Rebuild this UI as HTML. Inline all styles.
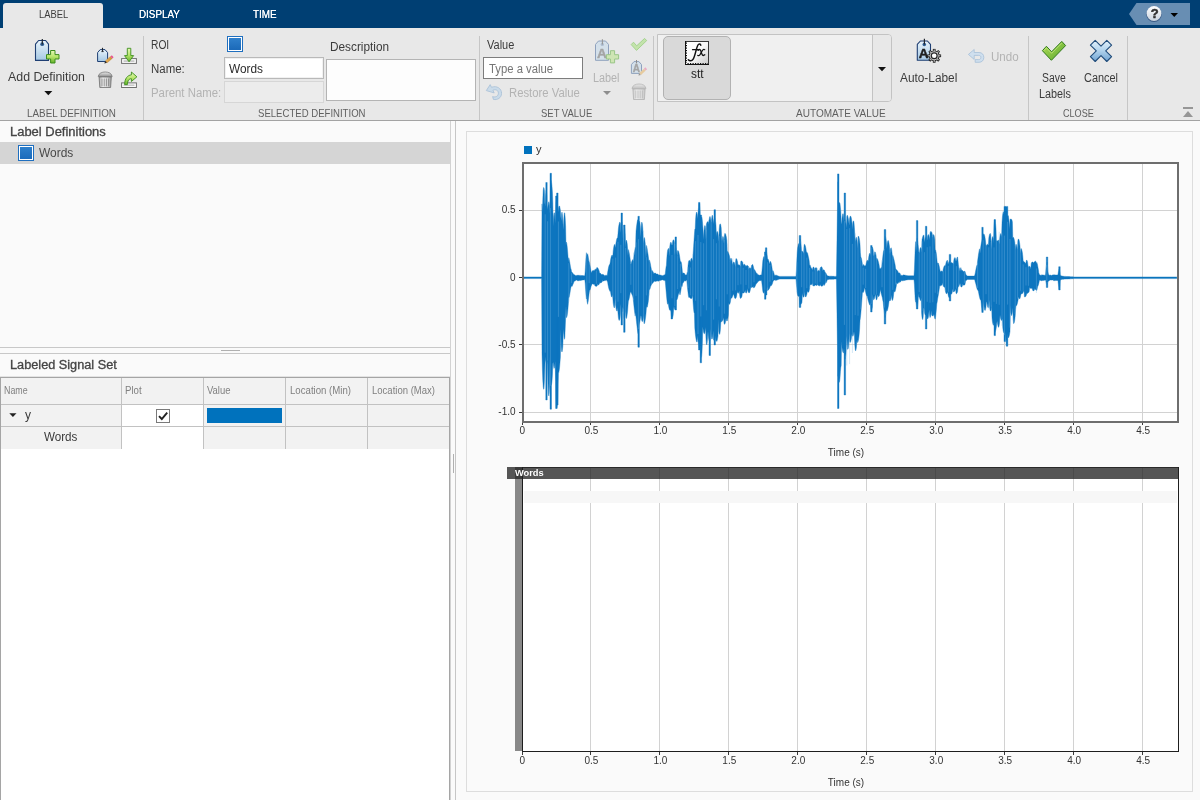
<!DOCTYPE html>
<html><head><meta charset="utf-8"><title>Signal Labeler</title>
<style>
*{box-sizing:border-box;margin:0;padding:0}
html,body{width:1200px;height:800px;overflow:hidden;background:#fafafa;font-family:"Liberation Sans",sans-serif;}
#root{position:relative;width:1200px;height:800px;overflow:hidden;}
.a{position:absolute;}
.t{position:absolute;white-space:nowrap;transform-origin:0 50%;display:block;filter:grayscale(1);}
text{filter:grayscale(1);}
svg{position:absolute;overflow:visible;}
</style></head><body><div id="root">

<div class="a" style="left:0;top:0;width:1200px;height:28px;background:#003f73"></div>
<div class="a" style="left:3px;top:3px;width:100px;height:25px;background:#e8e8e8;border-radius:3px 3px 0 0"></div>
<span class="t" style="left:38.80px;top:6.69px;font-size:11px;line-height:15px;color:#3c3c3c;transform:scaleX(0.8526);">LABEL</span>
<span class="t" style="left:138.70px;top:6.69px;font-size:11px;line-height:15px;color:#ffffff;transform:scaleX(0.8937);text-shadow:0 0 0.6px #fff;">DISPLAY</span>
<span class="t" style="left:253.30px;top:6.69px;font-size:11px;line-height:15px;color:#ffffff;transform:scaleX(0.9020);text-shadow:0 0 0.6px #fff;">TIME</span>
<svg style="left:1128px;top:3px" width="64" height="22" viewBox="0 0 64 22"><path d="M1 11 L8.5 0 H62 V22 H8.5 Z" fill="#688eb3"/><defs><linearGradient id="hg" x1="0" y1="0" x2="0" y2="1"><stop offset="0" stop-color="#ffffff"/><stop offset="1" stop-color="#c9d3de"/></linearGradient></defs><circle cx="26" cy="11.3" r="7.7" fill="#2b4a75" opacity="0.75"/><circle cx="26" cy="10.5" r="7.4" fill="url(#hg)"/><path d="M42.5 10 h7.5 l-3.75 4z" fill="#000"/></svg>
<span class="t" style="left:1150.70px;top:5.40px;font-size:13px;line-height:17px;color:#1f2f4f;transform:scaleX(1.0000);font-weight:bold;-webkit-text-stroke:0.5px #1f2f4f;">?</span>
<div class="a" style="left:0;top:28px;width:1200px;height:92px;background:#e8e8e8"></div>
<div class="a" style="left:0;top:120px;width:1200px;height:1px;background:#a3a3a3"></div>
<div class="a" style="left:143px;top:36px;width:1px;height:84px;background:#c6c6c6"></div>
<div class="a" style="left:479px;top:36px;width:1px;height:84px;background:#c6c6c6"></div>
<div class="a" style="left:653px;top:36px;width:1px;height:84px;background:#c6c6c6"></div>
<div class="a" style="left:1028px;top:36px;width:1px;height:84px;background:#c6c6c6"></div>
<div class="a" style="left:1127px;top:36px;width:1px;height:84px;background:#c6c6c6"></div>
<div class="a" style="left:657px;top:34px;width:235px;height:68px;background:#f0f0f0;border:1px solid #c3c3c3;border-radius:0 4px 4px 0"></div>
<div class="a" style="left:872px;top:35px;width:19px;height:66px;background:#e8e8e8;border-left:1px solid #c3c3c3;border-radius:0 3px 3px 0"></div>
<svg style="left:878px;top:67px" width="9" height="5"><path d="M0 0 h8 l-4 4.2z" fill="#111"/></svg>
<div class="a" style="left:663px;top:36px;width:68px;height:64px;background:#d9d9d9;border:1px solid #b2b2b2;border-radius:5px"></div>
<span class="t" style="left:27.00px;top:105.69px;font-size:11px;line-height:15px;color:#5f5f5f;transform:scaleX(0.8969);">LABEL DEFINITION</span>
<span class="t" style="left:257.50px;top:105.69px;font-size:11px;line-height:15px;color:#5f5f5f;transform:scaleX(0.8707);">SELECTED DEFINITION</span>
<span class="t" style="left:541.30px;top:105.69px;font-size:11px;line-height:15px;color:#5f5f5f;transform:scaleX(0.8604);">SET VALUE</span>
<span class="t" style="left:796.00px;top:105.69px;font-size:11px;line-height:15px;color:#5f5f5f;transform:scaleX(0.9125);">AUTOMATE VALUE</span>
<span class="t" style="left:1062.50px;top:105.69px;font-size:11px;line-height:15px;color:#5f5f5f;transform:scaleX(0.8259);">CLOSE</span>
<span class="t" style="left:8.00px;top:68.84px;font-size:12px;line-height:16px;color:#3b3b3b;transform:scaleX(1.0306);">Add Definition</span>
<svg style="left:44px;top:91px" width="9" height="5"><path d="M0.3 0 h8 l-4 4.3z" fill="#111"/></svg>
<span class="t" style="left:150.80px;top:36.84px;font-size:12px;line-height:16px;color:#3b3b3b;transform:scaleX(0.8531);">ROI</span>
<span class="t" style="left:150.80px;top:60.84px;font-size:12px;line-height:16px;color:#3b3b3b;transform:scaleX(0.9535);">Name:</span>
<span class="t" style="left:150.80px;top:84.84px;font-size:12px;line-height:16px;color:#b3b3b3;transform:scaleX(0.9482);">Parent Name:</span>
<span class="t" style="left:330.00px;top:38.84px;font-size:12px;line-height:16px;color:#3b3b3b;transform:scaleX(0.9830);">Description</span>
<span class="t" style="left:486.70px;top:36.84px;font-size:12px;line-height:16px;color:#3b3b3b;transform:scaleX(0.9161);">Value</span>
<span class="t" style="left:508.70px;top:84.84px;font-size:12px;line-height:16px;color:#b3b3b3;transform:scaleX(0.9421);">Restore Value</span>
<span class="t" style="left:593.00px;top:69.84px;font-size:12px;line-height:16px;color:#b3b3b3;transform:scaleX(0.9026);">Label</span>
<span class="t" style="left:690.80px;top:65.84px;font-size:12px;line-height:16px;color:#222;transform:scaleX(0.9867);">stt</span>
<span class="t" style="left:899.70px;top:69.84px;font-size:12px;line-height:16px;color:#3b3b3b;transform:scaleX(0.9872);">Auto-Label</span>
<span class="t" style="left:990.60px;top:48.84px;font-size:12px;line-height:16px;color:#b3b3b3;transform:scaleX(0.9656);">Undo</span>
<span class="t" style="left:1042.30px;top:69.84px;font-size:12px;line-height:16px;color:#3b3b3b;transform:scaleX(0.8665);">Save</span>
<span class="t" style="left:1038.50px;top:85.84px;font-size:12px;line-height:16px;color:#3b3b3b;transform:scaleX(0.9022);">Labels</span>
<span class="t" style="left:1084.00px;top:69.84px;font-size:12px;line-height:16px;color:#3b3b3b;transform:scaleX(0.9103);">Cancel</span>
<div class="a" style="left:224px;top:57px;width:100px;height:22px;background:#fff;border:1px solid #b9b9b9;box-shadow:inset 0 0 0 1px #f1f1f1"></div>
<span class="t" style="left:229.00px;top:60.84px;font-size:12px;line-height:16px;color:#2b2b2b;transform:scaleX(0.9868);">Words</span>
<div class="a" style="left:224px;top:81px;width:100px;height:22px;background:#ececec;border:1px solid #d6d6d6"></div>
<div class="a" style="left:326px;top:59px;width:150px;height:42px;background:#fdfdfd;border:1px solid #b4b4b4"></div>
<div class="a" style="left:483px;top:57px;width:100px;height:22px;background:#fff;border:1px solid #7d7d7d"></div>
<span class="t" style="left:488.70px;top:60.84px;font-size:12px;line-height:16px;color:#757575;transform:scaleX(0.9421);">Type a value</span>
<svg style="left:0;top:0" width="1200" height="125" viewBox="0 0 1200 125">
<defs>
<linearGradient id="tg" x1="0" y1="0" x2="0" y2="1"><stop offset="0" stop-color="#e9f4fb"/><stop offset="1" stop-color="#a5c8e4"/></linearGradient>
<linearGradient id="gp" x1="0" y1="0" x2="0" y2="1"><stop offset="0" stop-color="#e6f9b8"/><stop offset="0.5" stop-color="#b7e56a"/><stop offset="1" stop-color="#63b12a"/></linearGradient>
<linearGradient id="gck" x1="0" y1="0" x2="1" y2="1"><stop offset="0" stop-color="#b4e05a"/><stop offset="1" stop-color="#58a52c"/></linearGradient>
<linearGradient id="bx" x1="0" y1="0" x2="0" y2="1"><stop offset="0" stop-color="#e4f2fc"/><stop offset="0.45" stop-color="#b5d5ee"/><stop offset="1" stop-color="#6fa3d2"/></linearGradient>
<linearGradient id="trg" x1="0" y1="0" x2="1" y2="0"><stop offset="0" stop-color="#a8a8a8"/><stop offset="0.3" stop-color="#f4f4f4"/><stop offset="0.7" stop-color="#d6d6d6"/><stop offset="1" stop-color="#9a9a9a"/></linearGradient>
<linearGradient id="lidg" x1="0" y1="0" x2="0" y2="1"><stop offset="0" stop-color="#ececec"/><stop offset="1" stop-color="#909090"/></linearGradient>
<linearGradient id="fxg" x1="0" y1="0" x2="1" y2="1"><stop offset="0" stop-color="#ffffff"/><stop offset="0.5" stop-color="#fafafa"/><stop offset="1" stop-color="#c8c8c8"/></linearGradient>
<linearGradient id="pen" x1="0" y1="0" x2="1" y2="1"><stop offset="0" stop-color="#f0b860"/><stop offset="1" stop-color="#c98a2b"/></linearGradient>
<linearGradient id="sq" x1="0" y1="0" x2="0" y2="1"><stop offset="0" stop-color="#2f80cc"/><stop offset="1" stop-color="#1b69b8"/></linearGradient>
</defs>

<!-- Add Definition: tag + plus -->
<g id="tagbig">
<path d="M35.5 60.4 V44.2 L38.6 40.5 H45.6 L48.5 44.2 V60.4 Z" fill="url(#tg)" stroke="#1f3f73" stroke-width="1.1" stroke-linejoin="round"/>
<circle cx="42.2" cy="44.2" r="1.9" fill="#2f5f95"/>
<path d="M42.3 39 V44.6" stroke="#20262e" stroke-width="1.2"/>
</g>
<path d="M50.6 50.5 h4.4 v4.1 h4 v4.4 h-4 v4 h-4.4 v-4 h-4.1 v-4.4 h4.1z" fill="url(#gp)" stroke="#3c8d1c" stroke-width="1" stroke-linejoin="round"/>

<!-- edit tag -->
<path d="M97.6 61.5 V52.6 L100.2 49.6 H105 L107.6 52.6 V61.5 Z" fill="url(#tg)" stroke="#1f3f73" stroke-width="1" stroke-linejoin="round"/>
<path d="M102.5 47.8 V51.6" stroke="#20262e" stroke-width="1.1"/>
<path d="M101.4 51.6 h2.3" stroke="#20262e" stroke-width="0.9"/>
<g transform="translate(104.3 63.5) rotate(-40.6)">
<path d="M0 0 L2.6 -1.35 V1.35Z" fill="#2b2b2b"/>
<rect x="2.6" y="-1.35" width="6.6" height="2.7" fill="url(#pen)" stroke="#b77a22" stroke-width="0.3"/>
<rect x="9.2" y="-1.35" width="1.9" height="2.7" fill="#e8558f"/>
</g>

<!-- import -->
<rect x="121.6" y="58.6" width="14.8" height="4.8" fill="#ffffff" stroke="#6f6f6f" stroke-width="1"/>
<rect x="123.5" y="60.2" width="11" height="1.8" fill="#c9c9c9"/>
<path d="M127.3 48.3 H130.8 V55.6 H133.6 L129.05 61.8 L124.5 55.6 H127.3Z" fill="url(#gp)" stroke="#3c8d1c" stroke-width="0.9" stroke-linejoin="round"/>

<!-- trash -->
<g id="trash">
<path d="M98.2 76.6 C98.6 73.2 102 72 105.2 72 C108.4 72 111.8 73.2 112.2 76.6 Z" fill="url(#lidg)" stroke="#6c6c6c" stroke-width="0.7"/>
<path d="M99.1 77 H111.3 L110.6 87.5 H99.8 Z" fill="url(#trg)" stroke="#6f6f6f" stroke-width="0.8"/>
<path d="M102 78.5 V86.3 M104.2 78.5 V86.3 M106.4 78.5 V86.3 M108.6 78.5 V86.3" stroke="#7d7d7d" stroke-width="0.8"/>
</g>

<!-- export -->
<rect x="121.6" y="82.9" width="14.8" height="4.6" fill="#ffffff" stroke="#6f6f6f" stroke-width="1"/>
<rect x="123.5" y="84.4" width="11" height="1.7" fill="#c9c9c9"/>
<path d="M124.6 84.6 C124.6 78.8 127.6 75 131.4 74.9 V72 L136.9 76.8 L131.4 81.5 V78.7 C129 78.7 127.6 80.6 127.4 84.6 Z" fill="url(#gp)" stroke="#3c8d1c" stroke-width="0.9" stroke-linejoin="round"/>

<!-- ROI colour swatch -->
<rect x="227.5" y="36.5" width="15" height="15" fill="#ffffff" stroke="#1f6fbf" stroke-width="1"/>
<rect x="229" y="38" width="12" height="12" fill="url(#sq)"/>

<!-- restore (disabled) -->
<g opacity="0.95">
<path d="M486.3 90.6 L490.2 84.6 L491.5 87.3 C496.8 85.2 501.6 88.6 501.6 93.3 C501.6 97.6 497.6 100.4 493.4 99.4 L492.6 96.6 C495.6 97.6 498.4 96.2 498.4 93.2 C498.4 90.4 495.8 88.9 492.9 90.2 L494.2 92.9 Z" fill="#c9dbea" stroke="#a3bdd5" stroke-width="0.8" stroke-linejoin="round"/>
</g>

<!-- Label (disabled): tag A + plus -->
<g opacity="0.55">
<path d="M595.5 60.3 V44.4 L598.5 41 H605.5 L608.5 44.4 V60.3 Z" fill="#c4dbec" stroke="#47689a" stroke-width="1" stroke-linejoin="round"/>
<circle cx="602.3" cy="44.4" r="1.7" fill="#7f9cc0"/>
<path d="M602.4 39.3 V44.4" stroke="#555" stroke-width="1.1"/>
<text x="596.9" y="57.7" font-family="Liberation Sans, sans-serif" font-weight="bold" font-size="13.5" fill="#6e6e6e" stroke="#6e6e6e" stroke-width="0.4">A</text>
<path d="M610.4 50.7 h4.2 v4 h4 v4.3 h-4 v3.9 h-4.2 v-3.9 h-4 v-4.3 h4z" fill="#b9e48a" stroke="#5aa93a" stroke-width="1" stroke-linejoin="round"/>
</g>
<path d="M603 91 h8 l-4 4z" fill="#8d8d8d"/>

<!-- faded check -->
<path d="M631.2 44.6 L633.5 42.2 L636.7 45.8 L644.6 38.4 L646.7 40.6 L636.5 50.4 Z" fill="#c3e3ab" stroke="#9fd089" stroke-width="0.9" stroke-linejoin="round"/>

<!-- faded edit A tag -->
<g opacity="0.55">
<path d="M631.4 73.4 V64.6 L634 61.6 H638.9 L641.5 64.6 V73.4 Z" fill="#c4dbec" stroke="#47689a" stroke-width="1" stroke-linejoin="round"/>
<path d="M636.5 60 V63.4" stroke="#444" stroke-width="1"/>
<text x="632.8" y="72.4" font-family="Liberation Sans, sans-serif" font-weight="bold" font-size="10" fill="#6e6e6e" stroke="#6e6e6e" stroke-width="0.35">A</text>
<g transform="translate(638.4 75.6) rotate(-43)">
<path d="M0 0 L2.4 -1.3 V1.3Z" fill="#555"/>
<rect x="2.4" y="-1.3" width="6.4" height="2.6" fill="#e6b566"/>
<rect x="8.8" y="-1.3" width="1.9" height="2.6" fill="#ee7aa6"/>
</g>
</g>

<!-- faded trash -->
<g opacity="0.45" transform="translate(533.8 12)">
<path d="M98.2 76.6 C98.6 73.2 102 72 105.2 72 C108.4 72 111.8 73.2 112.2 76.6 Z" fill="url(#lidg)" stroke="#6c6c6c" stroke-width="0.7"/>
<path d="M99.1 77 H111.3 L110.6 87.5 H99.8 Z" fill="url(#trg)" stroke="#6f6f6f" stroke-width="0.8"/>
<path d="M102 78.5 V86.3 M104.2 78.5 V86.3 M106.4 78.5 V86.3 M108.6 78.5 V86.3" stroke="#7d7d7d" stroke-width="0.8"/>
</g>

<!-- fx icon -->
<rect x="685.5" y="41.5" width="23" height="23" fill="url(#fxg)" stroke="#3a3a3a" stroke-width="1"/>
<path d="M685.5 41 V65" stroke="#111" stroke-width="1"/>
<path d="M685 64.5 H709" stroke="#111" stroke-width="1"/>
<path d="M686.5 42.5 V63" stroke="#111" stroke-width="1" stroke-dasharray="1.2 1.3"/>
<path d="M687.5 63.5 H708" stroke="#111" stroke-width="1" stroke-dasharray="1.2 1.3"/>
<g fill="none" stroke="#111" stroke-linecap="round" stroke-linejoin="round">
<path d="M700.8 45.3 C700.7 43.7 698.7 43.4 697.8 45.3 C696.9 47.2 696.4 49.2 695.6 52.2 C694.8 55.2 694.1 57.7 693 59.4 C691.9 61.1 689.6 61.2 688.3 59.8" stroke-width="1.45"/>
<path d="M692.5 49.7 H698.2" stroke-width="1.2"/>
<path d="M698.1 50.3 C699.3 48.8 700.5 49.4 701.1 51.6 C701.9 54.6 702.7 56.5 704.8 54.8" stroke-width="1.35"/>
<path d="M704.7 49.7 C703.1 48.8 702.3 50.6 701.3 52.4 C700.3 54.4 699.3 56.5 697.8 55.4" stroke-width="1.25"/>
</g>

<!-- auto-label -->
<path d="M917.3 60.3 V44.4 L920.4 41 H927.4 L930.5 44.4 V60.3 Z" fill="url(#tg)" stroke="#1f3f73" stroke-width="1.1" stroke-linejoin="round"/>
<circle cx="924.3" cy="44.5" r="1.8" fill="#2f5f95"/>
<path d="M924.4 38.7 V44.6" stroke="#20262e" stroke-width="1.2"/>
<text x="918.7" y="57.8" font-family="Liberation Sans, sans-serif" font-weight="bold" font-size="13.5" fill="#1e1e1e" stroke="#1e1e1e" stroke-width="0.45">A</text>
<g transform="translate(934.2 55.8)">
<g stroke="#1a1a1a" stroke-width="2.7" stroke-linecap="butt">
<path d="M0 -4.4 V-6.9"/><path d="M0 4.4 V6.9"/><path d="M-4.4 0 H-6.9"/><path d="M4.4 0 H6.9"/>
<path d="M3.1 -3.1 L4.9 -4.9"/><path d="M-3.1 -3.1 L-4.9 -4.9"/><path d="M3.1 3.1 L4.9 4.9"/><path d="M-3.1 3.1 L-4.9 4.9"/>
</g>
<circle r="5.4" fill="#1a1a1a"/>
<g stroke="#bdbdbd" stroke-width="1.1" stroke-linecap="butt">
<path d="M0 -4.2 V-6.2"/><path d="M0 4.2 V6.2"/><path d="M-4.2 0 H-6.2"/><path d="M4.2 0 H6.2"/>
<path d="M3 -3 L4.4 -4.4"/><path d="M-3 -3 L-4.4 -4.4"/><path d="M3 3 L4.4 4.4"/><path d="M-3 3 L-4.4 4.4"/>
</g>
<circle r="4.5" fill="#c6c6c6"/>
<circle r="3.5" fill="#262626"/>
<circle r="2.3" fill="#ffffff"/>
</g>

<!-- undo (disabled) -->
<path d="M968.4 54.4 L974.2 49.5 V52.5 H979 C982.2 52.5 983.8 54.8 983.8 57.4 C983.8 60.2 982 62.3 979 62.3 H975.2 V59.6 H978.6 C980.2 59.6 980.9 58.6 980.9 57.4 C980.9 56.2 980.2 55.4 978.6 55.4 H974.2 V59.4 Z" fill="#cfdfee" stroke="#a6bfd8" stroke-width="0.8" stroke-linejoin="round"/>

<!-- save check -->
<path d="M1042.4 50.7 L1046.4 46.3 L1051.6 51.8 L1061.8 41.4 L1065.6 45.6 L1051.4 60.3 Z" fill="url(#gck)" stroke="#2f7a1a" stroke-width="1" stroke-linejoin="round"/>
<path d="M1043.8 50.7 L1046.4 47.8 L1051.6 53.3 L1061.8 42.9" fill="none" stroke="#d4f08e" stroke-width="0.8" opacity="0.8"/>

<!-- cancel X -->
<g transform="translate(1101 50.9)">
<path d="M-10.6 -5.8 L-5.8 -10.6 L0 -4.7 L5.8 -10.6 L10.6 -5.8 L4.7 0 L10.6 5.8 L5.8 10.6 L0 4.7 L-5.8 10.6 L-10.6 5.8 L-4.7 0 Z" fill="url(#bx)" stroke="#1f4b7a" stroke-width="1.1" stroke-linejoin="round"/>
</g>

<!-- collapse toolstrip -->
<path d="M1183 108 H1193" stroke="#969696" stroke-width="2"/>
<path d="M1188 111 L1193 117 H1183 Z" fill="#969696"/>
</svg>

<div class="a" style="left:0;top:121px;width:450px;height:226px;background:#fafafa"></div>
<div class="a" style="left:450px;top:121px;width:1px;height:679px;background:#d2d2d2"></div>
<div class="a" style="left:455px;top:121px;width:1px;height:679px;background:#c6c6c6"></div>
<span class="t" style="left:9.80px;top:123.84px;font-size:12px;line-height:16px;color:#444;transform:scaleX(1.0798);-webkit-text-stroke:0.3px #444;">Label Definitions</span>
<div class="a" style="left:0;top:142px;width:450px;height:22px;background:#d5d5d5"></div>
<div class="a" style="left:18px;top:145px;width:16px;height:16px;background:#fff;border:1px solid #1f6fbf"></div>
<div class="a" style="left:20px;top:147px;width:12px;height:12px;background:linear-gradient(#2e7fcb,#1c6bbb)"></div>
<span class="t" style="left:39.00px;top:144.84px;font-size:12px;line-height:16px;color:#484848;transform:scaleX(0.9956);">Words</span>
<div class="a" style="left:0;top:347px;width:450px;height:1px;background:#c8c8c8"></div>
<div class="a" style="left:0;top:353px;width:450px;height:1px;background:#c8c8c8"></div>
<div class="a" style="left:221px;top:350px;width:19px;height:1px;background:#b0b0b0"></div>
<div class="a" style="left:453px;top:454px;width:1px;height:19px;background:#b0b0b0"></div>
<span class="t" style="left:9.80px;top:356.84px;font-size:12px;line-height:16px;color:#444;transform:scaleX(1.0601);-webkit-text-stroke:0.3px #444;">Labeled Signal Set</span>
<div class="a" style="left:0;top:376px;width:450px;height:1px;background:#e3e3e3"></div>
<div class="a" style="left:0;top:377px;width:450px;height:1px;background:#a5a5a5"></div>
<div class="a" style="left:1px;top:378px;width:448px;height:71px;background:#f2f2f2"></div>
<div class="a" style="left:1px;top:449px;width:448px;height:351px;background:#ffffff"></div>
<div class="a" style="left:122px;top:405px;width:81px;height:44px;background:#ffffff"></div>
<div class="a" style="left:0px;top:377px;width:1px;height:423px;background:#a5a5a5"></div>
<div class="a" style="left:449px;top:377px;width:1px;height:423px;background:#a5a5a5"></div>
<div class="a" style="left:121px;top:378px;width:1px;height:71px;background:#c2c2c2"></div>
<div class="a" style="left:203px;top:378px;width:1px;height:71px;background:#c2c2c2"></div>
<div class="a" style="left:285px;top:378px;width:1px;height:71px;background:#c2c2c2"></div>
<div class="a" style="left:367px;top:378px;width:1px;height:71px;background:#c2c2c2"></div>
<div class="a" style="left:1px;top:404px;width:448px;height:1px;background:#c2c2c2"></div>
<div class="a" style="left:1px;top:426px;width:448px;height:1px;background:#c2c2c2"></div>
<span class="t" style="left:4.40px;top:383.94px;font-size:10px;line-height:14px;color:#808080;transform:scaleX(0.8848);">Name</span>
<span class="t" style="left:125.40px;top:383.94px;font-size:10px;line-height:14px;color:#808080;transform:scaleX(0.9634);">Plot</span>
<span class="t" style="left:207.00px;top:383.94px;font-size:10px;line-height:14px;color:#808080;transform:scaleX(0.9463);">Value</span>
<span class="t" style="left:289.50px;top:383.94px;font-size:10px;line-height:14px;color:#808080;transform:scaleX(0.9628);">Location (Min)</span>
<span class="t" style="left:371.50px;top:383.94px;font-size:10px;line-height:14px;color:#808080;transform:scaleX(0.9526);">Location (Max)</span>
<svg style="left:9px;top:413px" width="8" height="5"><path d="M0.3 0.2 h7.2 l-3.6 3.8z" fill="#222"/></svg>
<span class="t" style="left:25.00px;top:406.84px;font-size:12px;line-height:16px;color:#3a3a3a;transform:scaleX(1.0000);">y</span>
<div class="a" style="left:156px;top:409px;width:14px;height:14px;background:#fff;border:1px solid #7a7a7a"></div>
<svg style="left:156px;top:409px" width="14" height="14"><path d="M3 7.2 L5.8 10 L11.2 3.6" fill="none" stroke="#222" stroke-width="1.9"/></svg>
<div class="a" style="left:207px;top:408px;width:75px;height:15px;background:#0072bd"></div>
<span class="t" style="left:43.60px;top:428.84px;font-size:12px;line-height:16px;color:#3a3a3a;transform:scaleX(0.9694);">Words</span>
<div class="a" style="left:466px;top:131px;width:727px;height:661px;border:1px solid #dddddd;background:#fafafa"></div>
<div class="a" style="left:524px;top:146px;width:8px;height:8px;background:#0072bd"></div>
<span class="t" style="left:536.00px;top:142.29px;font-size:11px;line-height:15px;color:#333;transform:scaleX(1.0000);">y</span>
<div class="a" style="left:524px;top:164px;width:653px;height:257px;background:#fff"></div>
<div class="a" style="left:590px;top:164px;width:1px;height:257px;background:#d2d2d2"></div>
<div class="a" style="left:659px;top:164px;width:1px;height:257px;background:#d2d2d2"></div>
<div class="a" style="left:728px;top:164px;width:1px;height:257px;background:#d2d2d2"></div>
<div class="a" style="left:797px;top:164px;width:1px;height:257px;background:#d2d2d2"></div>
<div class="a" style="left:866px;top:164px;width:1px;height:257px;background:#d2d2d2"></div>
<div class="a" style="left:935px;top:164px;width:1px;height:257px;background:#d2d2d2"></div>
<div class="a" style="left:1004px;top:164px;width:1px;height:257px;background:#d2d2d2"></div>
<div class="a" style="left:1073px;top:164px;width:1px;height:257px;background:#d2d2d2"></div>
<div class="a" style="left:1142px;top:164px;width:1px;height:257px;background:#d2d2d2"></div>
<div class="a" style="left:524px;top:210px;width:653px;height:1px;background:#d2d2d2"></div>
<div class="a" style="left:524px;top:277px;width:653px;height:1px;background:#d2d2d2"></div>
<div class="a" style="left:524px;top:344px;width:653px;height:1px;background:#d2d2d2"></div>
<div class="a" style="left:524px;top:412px;width:653px;height:1px;background:#d2d2d2"></div>
<svg style="left:0;top:0" width="1200" height="800"><path d="M524.0,276.9 L524.4,276.9 L524.8,276.9 L525.2,276.9 L525.6,276.9 L526.0,276.9 L526.4,276.9 L526.8,276.9 L527.2,276.9 L527.6,276.9 L528.0,276.9 L528.4,276.9 L528.8,276.9 L529.2,276.9 L529.6,276.9 L530.0,276.9 L530.4,276.9 L530.8,276.9 L531.2,276.9 L531.6,276.9 L532.0,276.9 L532.4,276.9 L532.8,276.9 L533.2,276.9 L533.6,276.9 L534.0,276.9 L534.4,276.9 L534.8,276.9 L535.2,276.9 L535.6,276.9 L536.0,276.9 L536.4,276.9 L536.8,276.9 L537.2,276.9 L537.6,276.9 L538.0,276.9 L538.4,276.9 L538.8,276.9 L539.2,276.9 L539.6,276.9 L540.0,276.9 L540.4,276.9 L540.8,276.9 L541.2,276.9 L541.6,276.9 L542.0,203.9 L542.4,212.2 L542.8,199.7 L543.2,190.3 L543.6,187.5 L544.0,187.8 L544.4,190.6 L544.8,202.8 L545.2,206.5 L545.6,194.5 L546.0,190.4 L546.4,190.6 L546.8,195.7 L547.2,205.3 L547.6,210.1 L548.0,206.0 L548.4,203.1 L548.8,201.7 L549.2,202.8 L549.6,206.0 L550.0,213.6 L550.4,191.9 L550.8,181.5 L551.2,180.6 L551.6,182.5 L552.0,186.3 L552.4,191.7 L552.8,202.7 L553.2,226.0 L553.6,216.2 L554.0,213.0 L554.4,212.8 L554.8,215.6 L555.2,223.4 L555.6,209.4 L556.0,202.8 L556.4,199.9 L556.8,199.0 L557.2,200.9 L557.6,204.6 L558.0,212.8 L558.4,210.2 L558.8,206.7 L559.2,206.0 L559.6,206.1 L560.0,207.9 L560.4,210.3 L560.8,216.6 L561.2,220.8 L561.6,213.7 L562.0,212.1 L562.4,214.8 L562.8,219.7 L563.2,229.7 L563.6,223.2 L564.0,216.3 L564.4,212.8 L564.8,213.1 L565.2,218.1 L565.6,226.1 L566.0,245.4 L566.4,242.1 L566.8,243.4 L567.2,246.6 L567.6,251.1 L568.0,256.2 L568.4,261.9 L568.8,257.8 L569.2,259.5 L569.6,261.4 L570.0,263.8 L570.4,266.2 L570.8,268.4 L571.2,269.6 L571.6,271.9 L572.0,272.2 L572.4,272.6 L572.8,273.2 L573.2,273.7 L573.6,274.1 L574.0,275.1 L574.4,274.8 L574.8,275.0 L575.2,275.2 L575.6,275.5 L576.0,276.0 L576.4,275.5 L576.8,275.3 L577.2,275.3 L577.6,275.3 L578.0,275.3 L578.4,275.3 L578.8,275.3 L579.2,275.3 L579.6,275.4 L580.0,275.4 L580.4,275.4 L580.8,275.4 L581.2,275.5 L581.6,275.5 L582.0,275.5 L582.4,275.6 L582.8,275.6 L583.2,275.6 L583.6,275.7 L584.0,275.7 L584.4,275.7 L584.8,275.8 L585.2,271.2 L585.6,264.1 L586.0,257.0 L586.4,252.7 L586.8,256.7 L587.2,254.6 L587.6,253.7 L588.0,255.3 L588.4,257.7 L588.8,260.8 L589.2,261.8 L589.6,263.1 L590.0,265.2 L590.4,267.5 L590.8,269.8 L591.2,272.2 L591.6,272.4 L592.0,271.4 L592.4,270.8 L592.8,270.5 L593.2,270.3 L593.6,270.5 L594.0,271.3 L594.4,270.2 L594.8,269.6 L595.2,269.3 L595.6,269.2 L596.0,269.5 L596.4,269.1 L596.8,267.6 L597.2,267.5 L597.6,267.8 L598.0,268.3 L598.4,269.0 L598.8,269.9 L599.2,271.0 L599.6,273.2 L600.0,273.1 L600.4,273.3 L600.8,273.6 L601.2,274.1 L601.6,274.7 L602.0,274.3 L602.4,274.2 L602.8,274.6 L603.2,274.6 L603.6,274.7 L604.0,274.9 L604.4,275.2 L604.8,276.3 L605.2,276.0 L605.6,275.1 L606.0,275.2 L606.4,275.3 L606.8,275.4 L607.2,275.6 L607.6,272.5 L608.0,270.3 L608.4,268.1 L608.8,266.2 L609.2,264.9 L609.6,264.5 L610.0,263.6 L610.4,261.0 L610.8,258.6 L611.2,256.8 L611.6,255.7 L612.0,255.0 L612.4,255.3 L612.8,257.0 L613.2,250.9 L613.6,247.9 L614.0,245.7 L614.4,244.5 L614.8,244.6 L615.2,247.8 L615.6,245.6 L616.0,242.7 L616.4,240.5 L616.8,238.8 L617.2,238.0 L617.6,237.8 L618.0,233.6 L618.4,228.6 L618.8,225.6 L619.2,223.7 L619.6,222.3 L620.0,222.3 L620.4,223.0 L620.8,232.7 L621.2,226.6 L621.6,221.7 L622.0,222.2 L622.4,225.0 L622.8,231.4 L623.2,246.7 L623.6,225.8 L624.0,225.5 L624.4,226.5 L624.8,229.4 L625.2,233.9 L625.6,248.2 L626.0,241.4 L626.4,240.1 L626.8,241.3 L627.2,243.8 L627.6,248.4 L628.0,255.9 L628.4,249.6 L628.8,250.7 L629.2,252.8 L629.6,255.3 L630.0,257.9 L630.4,261.1 L630.8,264.2 L631.2,263.6 L631.6,261.9 L632.0,260.8 L632.4,260.3 L632.8,259.5 L633.2,261.2 L633.6,258.9 L634.0,255.8 L634.4,252.8 L634.8,250.1 L635.2,247.7 L635.6,246.5 L636.0,231.3 L636.4,227.6 L636.8,224.3 L637.2,221.7 L637.6,220.0 L638.0,219.5 L638.4,230.6 L638.8,223.9 L639.2,221.6 L639.6,221.3 L640.0,223.2 L640.4,227.9 L640.8,237.3 L641.2,226.5 L641.6,222.4 L642.0,222.2 L642.4,223.9 L642.8,228.3 L643.2,237.7 L643.6,243.5 L644.0,238.2 L644.4,237.5 L644.8,239.5 L645.2,242.9 L645.6,248.7 L646.0,258.7 L646.4,245.4 L646.8,246.6 L647.2,248.8 L647.6,251.8 L648.0,254.0 L648.4,257.0 L648.8,260.6 L649.2,260.1 L649.6,260.5 L650.0,261.9 L650.4,263.8 L650.8,266.2 L651.2,268.2 L651.6,270.4 L652.0,270.3 L652.4,270.8 L652.8,271.4 L653.2,272.1 L653.6,273.0 L654.0,273.9 L654.4,273.0 L654.8,273.0 L655.2,273.1 L655.6,273.3 L656.0,273.6 L656.4,274.0 L656.8,274.1 L657.2,274.0 L657.6,274.0 L658.0,274.3 L658.4,274.6 L658.8,275.2 L659.2,274.9 L659.6,274.9 L660.0,274.9 L660.4,275.0 L660.8,275.2 L661.2,275.3 L661.6,275.4 L662.0,275.6 L662.4,275.7 L662.8,275.6 L663.2,275.4 L663.6,275.2 L664.0,275.0 L664.4,274.8 L664.8,275.0 L665.2,274.2 L665.6,270.5 L666.0,267.2 L666.4,265.2 L666.8,258.3 L667.2,253.5 L667.6,250.2 L668.0,249.2 L668.4,248.5 L668.8,248.5 L669.2,256.6 L669.6,248.2 L670.0,245.0 L670.4,242.8 L670.8,242.2 L671.2,242.6 L671.6,244.2 L672.0,249.4 L672.4,243.4 L672.8,240.9 L673.2,239.9 L673.6,239.8 L674.0,240.4 L674.4,242.3 L674.8,255.1 L675.2,249.8 L675.6,247.3 L676.0,247.8 L676.4,249.4 L676.8,251.9 L677.2,256.6 L677.6,250.7 L678.0,250.4 L678.4,250.9 L678.8,252.1 L679.2,253.8 L679.6,256.1 L680.0,259.0 L680.4,262.1 L680.8,261.4 L681.2,262.1 L681.6,263.8 L682.0,267.6 L682.4,272.1 L682.8,273.6 L683.2,273.1 L683.6,272.9 L684.0,273.0 L684.4,273.3 L684.8,273.9 L685.2,275.2 L685.6,274.8 L686.0,274.9 L686.4,275.1 L686.8,274.3 L687.2,272.5 L687.6,271.7 L688.0,265.8 L688.4,262.5 L688.8,260.7 L689.2,260.5 L689.6,260.5 L690.0,260.8 L690.4,262.5 L690.8,259.6 L691.2,258.5 L691.6,258.2 L692.0,258.7 L692.4,260.9 L692.8,259.5 L693.2,252.8 L693.6,246.4 L694.0,240.2 L694.4,234.5 L694.8,229.2 L695.2,228.7 L695.6,219.2 L696.0,214.3 L696.4,212.6 L696.8,212.1 L697.2,213.7 L697.6,218.9 L698.0,213.6 L698.4,208.6 L698.8,204.9 L699.2,203.6 L699.6,204.3 L700.0,208.7 L700.4,218.8 L700.8,222.0 L701.2,217.3 L701.6,216.8 L702.0,217.8 L702.4,221.3 L702.8,226.1 L703.2,232.2 L703.6,239.8 L704.0,230.8 L704.4,227.2 L704.8,225.6 L705.2,225.8 L705.6,229.0 L706.0,239.6 L706.4,224.1 L706.8,222.9 L707.2,222.1 L707.6,221.7 L708.0,221.5 L708.4,221.9 L708.8,224.6 L709.2,219.2 L709.6,217.1 L710.0,216.4 L710.4,217.6 L710.8,220.5 L711.2,222.6 L711.6,218.8 L712.0,215.8 L712.4,215.2 L712.8,216.7 L713.2,219.9 L713.6,224.1 L714.0,220.3 L714.4,218.7 L714.8,218.1 L715.2,219.6 L715.6,221.8 L716.0,225.4 L716.4,236.8 L716.8,232.1 L717.2,231.4 L717.6,231.8 L718.0,233.5 L718.4,236.3 L718.8,241.5 L719.2,229.3 L719.6,225.1 L720.0,223.9 L720.4,223.9 L720.8,225.1 L721.2,227.8 L721.6,236.1 L722.0,241.1 L722.4,238.2 L722.8,236.5 L723.2,236.7 L723.6,238.5 L724.0,243.4 L724.4,235.5 L724.8,233.4 L725.2,233.5 L725.6,234.1 L726.0,235.4 L726.4,237.2 L726.8,240.1 L727.2,251.3 L727.6,251.2 L728.0,251.9 L728.4,252.7 L728.8,253.8 L729.2,255.0 L729.6,256.6 L730.0,261.8 L730.4,259.6 L730.8,258.2 L731.2,258.3 L731.6,259.4 L732.0,261.0 L732.4,264.7 L732.8,263.5 L733.2,262.4 L733.6,262.0 L734.0,262.0 L734.4,262.7 L734.8,264.0 L735.2,266.7 L735.6,261.3 L736.0,259.0 L736.4,258.6 L736.8,259.0 L737.2,260.4 L737.6,262.1 L738.0,265.5 L738.4,264.7 L738.8,264.7 L739.2,264.8 L739.6,265.1 L740.0,265.7 L740.4,266.5 L740.8,261.3 L741.2,261.0 L741.6,261.0 L742.0,261.3 L742.4,261.8 L742.8,262.5 L743.2,266.1 L743.6,264.6 L744.0,264.3 L744.4,264.2 L744.8,264.4 L745.2,265.0 L745.6,265.7 L746.0,266.4 L746.4,265.8 L746.8,265.5 L747.2,265.4 L747.6,265.5 L748.0,265.8 L748.4,266.2 L748.8,269.0 L749.2,268.2 L749.6,267.7 L750.0,267.7 L750.4,268.0 L750.8,268.7 L751.2,267.4 L751.6,265.3 L752.0,264.8 L752.4,264.5 L752.8,264.6 L753.2,265.9 L753.6,267.4 L754.0,269.7 L754.4,269.6 L754.8,270.0 L755.2,270.7 L755.6,271.5 L756.0,272.4 L756.4,273.2 L756.8,273.2 L757.2,273.6 L757.6,274.2 L758.0,274.7 L758.4,274.8 L758.8,275.1 L759.2,275.5 L759.6,275.0 L760.0,274.9 L760.4,274.9 L760.8,275.0 L761.2,275.0 L761.6,274.5 L762.0,270.5 L762.4,265.7 L762.8,260.7 L763.2,258.5 L763.6,257.0 L764.0,256.4 L764.4,257.5 L764.8,256.0 L765.2,252.1 L765.6,250.2 L766.0,250.5 L766.4,251.4 L766.8,253.2 L767.2,255.8 L767.6,259.6 L768.0,258.9 L768.4,259.8 L768.8,260.8 L769.2,262.3 L769.6,264.3 L770.0,262.5 L770.4,261.2 L770.8,261.9 L771.2,263.1 L771.6,264.9 L772.0,267.3 L772.4,271.3 L772.8,270.4 L773.2,270.9 L773.6,272.0 L774.0,273.4 L774.4,274.9 L774.8,275.5 L775.2,275.7 L775.6,274.9 L776.0,275.1 L776.4,275.2 L776.8,275.4 L777.2,275.5 L777.6,275.7 L778.0,275.9 L778.4,276.0 L778.8,276.2 L779.2,276.3 L779.6,276.4 L780.0,276.4 L780.4,276.4 L780.8,276.4 L781.2,276.4 L781.6,276.4 L782.0,276.4 L782.4,276.4 L782.8,276.4 L783.2,276.4 L783.6,276.4 L784.0,276.4 L784.4,276.4 L784.8,276.4 L785.2,276.4 L785.6,276.4 L786.0,276.4 L786.4,276.4 L786.8,276.4 L787.2,276.4 L787.6,276.4 L788.0,276.4 L788.4,276.4 L788.8,276.4 L789.2,276.4 L789.6,276.4 L790.0,276.4 L790.4,276.4 L790.8,276.4 L791.2,276.4 L791.6,276.4 L792.0,276.4 L792.4,276.4 L792.8,276.4 L793.2,276.4 L793.6,276.4 L794.0,276.4 L794.4,276.4 L794.8,276.4 L795.2,276.4 L795.6,276.4 L796.0,275.8 L796.4,270.2 L796.8,260.7 L797.2,252.2 L797.6,248.1 L798.0,245.9 L798.4,244.1 L798.8,243.5 L799.2,249.3 L799.6,242.2 L800.0,238.8 L800.4,239.6 L800.8,242.3 L801.2,246.5 L801.6,251.1 L802.0,251.1 L802.4,251.2 L802.8,251.7 L803.2,252.4 L803.6,253.5 L804.0,246.0 L804.4,244.2 L804.8,244.5 L805.2,245.4 L805.6,246.8 L806.0,248.9 L806.4,252.2 L806.8,252.2 L807.2,252.5 L807.6,253.3 L808.0,254.9 L808.4,256.7 L808.8,258.6 L809.2,260.7 L809.6,265.5 L810.0,264.9 L810.4,265.8 L810.8,267.2 L811.2,267.7 L811.6,268.2 L812.0,268.9 L812.4,270.4 L812.8,267.9 L813.2,267.1 L813.6,267.1 L814.0,267.4 L814.4,268.4 L814.8,270.5 L815.2,267.9 L815.6,267.8 L816.0,267.8 L816.4,267.8 L816.8,267.9 L817.2,271.8 L817.6,270.9 L818.0,270.6 L818.4,270.4 L818.8,270.4 L819.2,270.7 L819.6,271.1 L820.0,269.0 L820.4,267.8 L820.8,267.1 L821.2,266.7 L821.6,266.9 L822.0,267.2 L822.4,268.2 L822.8,270.8 L823.2,270.1 L823.6,269.8 L824.0,269.7 L824.4,270.3 L824.8,271.4 L825.2,272.6 L825.6,272.7 L826.0,273.3 L826.4,274.1 L826.8,275.0 L827.2,275.3 L827.6,276.1 L828.0,276.1 L828.4,276.1 L828.8,276.1 L829.2,276.2 L829.6,276.2 L830.0,276.2 L830.4,276.2 L830.8,276.2 L831.2,276.2 L831.6,276.2 L832.0,276.3 L832.4,276.3 L832.8,276.3 L833.2,276.3 L833.6,276.3 L834.0,276.3 L834.4,276.4 L834.8,276.4 L835.2,276.4 L835.6,276.4 L836.0,276.4 L836.4,276.1 L836.8,251.4 L837.2,225.3 L837.6,200.2 L838.0,181.8 L838.4,199.2 L838.8,208.6 L839.2,202.7 L839.6,202.6 L840.0,203.5 L840.4,207.3 L840.8,211.8 L841.2,222.1 L841.6,224.4 L842.0,218.1 L842.4,215.4 L842.8,213.8 L843.2,213.8 L843.6,216.3 L844.0,221.5 L844.4,223.5 L844.8,219.9 L845.2,219.7 L845.6,221.2 L846.0,223.8 L846.4,228.4 L846.8,216.4 L847.2,215.2 L847.6,215.6 L848.0,217.0 L848.4,218.9 L848.8,221.7 L849.2,225.5 L849.6,218.6 L850.0,216.7 L850.4,216.0 L850.8,216.3 L851.2,217.4 L851.6,219.6 L852.0,222.9 L852.4,229.5 L852.8,222.8 L853.2,221.1 L853.6,220.9 L854.0,222.6 L854.4,227.4 L854.8,234.4 L855.2,241.5 L855.6,239.2 L856.0,237.4 L856.4,237.4 L856.8,239.0 L857.2,242.3 L857.6,248.5 L858.0,237.1 L858.4,236.0 L858.8,236.7 L859.2,238.1 L859.6,240.4 L860.0,244.1 L860.4,252.7 L860.8,257.3 L861.2,257.6 L861.6,259.1 L862.0,261.3 L862.4,264.4 L862.8,266.5 L863.2,265.2 L863.6,264.4 L864.0,265.1 L864.4,266.3 L864.8,265.7 L865.2,265.6 L865.6,266.3 L866.0,264.2 L866.4,262.5 L866.8,261.0 L867.2,260.3 L867.6,260.3 L868.0,261.7 L868.4,259.8 L868.8,256.5 L869.2,254.5 L869.6,253.5 L870.0,253.2 L870.4,254.6 L870.8,258.9 L871.2,249.7 L871.6,247.4 L872.0,246.9 L872.4,247.1 L872.8,248.2 L873.2,249.9 L873.6,254.9 L874.0,255.9 L874.4,253.0 L874.8,251.7 L875.2,252.0 L875.6,253.2 L876.0,255.6 L876.4,258.5 L876.8,258.2 L877.2,258.6 L877.6,259.3 L878.0,260.4 L878.4,261.8 L878.8,263.4 L879.2,265.3 L879.6,268.6 L880.0,268.5 L880.4,269.1 L880.8,268.0 L881.2,267.4 L881.6,268.0 L882.0,263.5 L882.4,260.6 L882.8,256.6 L883.2,253.2 L883.6,250.8 L884.0,250.3 L884.4,248.3 L884.8,240.5 L885.2,236.5 L885.6,237.2 L886.0,239.0 L886.4,242.2 L886.8,248.7 L887.2,243.8 L887.6,241.6 L888.0,240.4 L888.4,240.7 L888.8,242.0 L889.2,244.4 L889.6,247.6 L890.0,253.9 L890.4,249.2 L890.8,248.2 L891.2,247.8 L891.6,249.4 L892.0,252.5 L892.4,256.9 L892.8,255.4 L893.2,256.6 L893.6,258.1 L894.0,259.6 L894.4,261.4 L894.8,263.2 L895.2,265.2 L895.6,268.5 L896.0,269.0 L896.4,269.8 L896.8,270.0 L897.2,270.4 L897.6,271.0 L898.0,271.6 L898.4,272.8 L898.8,272.9 L899.2,272.7 L899.6,272.9 L900.0,273.4 L900.4,274.2 L900.8,275.5 L901.2,275.4 L901.6,275.3 L902.0,275.3 L902.4,275.4 L902.8,275.5 L903.2,274.8 L903.6,274.9 L904.0,275.0 L904.4,275.1 L904.8,275.1 L905.2,275.2 L905.6,275.3 L906.0,275.4 L906.4,275.5 L906.8,275.5 L907.2,275.6 L907.6,275.7 L908.0,275.8 L908.4,275.8 L908.8,275.8 L909.2,275.8 L909.6,275.8 L910.0,275.8 L910.4,275.8 L910.8,275.8 L911.2,275.8 L911.6,275.8 L912.0,275.8 L912.4,275.8 L912.8,275.8 L913.2,275.8 L913.6,275.8 L914.0,275.8 L914.4,269.3 L914.8,258.4 L915.2,248.1 L915.6,241.6 L916.0,251.8 L916.4,245.7 L916.8,241.2 L917.2,238.3 L917.6,241.0 L918.0,244.2 L918.4,247.7 L918.8,251.8 L919.2,253.3 L919.6,251.7 L920.0,248.8 L920.4,247.7 L920.8,247.6 L921.2,248.6 L921.6,252.4 L922.0,239.6 L922.4,238.0 L922.8,236.5 L923.2,235.5 L923.6,234.9 L924.0,235.5 L924.4,242.5 L924.8,239.9 L925.2,237.7 L925.6,236.8 L926.0,236.6 L926.4,238.0 L926.8,241.0 L927.2,239.6 L927.6,236.2 L928.0,234.8 L928.4,234.6 L928.8,235.3 L929.2,236.8 L929.6,240.0 L930.0,233.3 L930.4,231.7 L930.8,231.5 L931.2,231.6 L931.6,232.0 L932.0,232.9 L932.4,234.7 L932.8,237.6 L933.2,235.3 L933.6,234.5 L934.0,235.0 L934.4,237.1 L934.8,239.4 L935.2,252.9 L935.6,249.9 L936.0,251.6 L936.4,254.1 L936.8,258.0 L937.2,262.2 L937.6,263.7 L938.0,263.0 L938.4,263.2 L938.8,264.4 L939.2,266.0 L939.6,268.2 L940.0,270.3 L940.4,272.2 L940.8,271.2 L941.2,270.8 L941.6,271.0 L942.0,271.5 L942.4,271.3 L942.8,272.0 L943.2,269.3 L943.6,267.8 L944.0,266.6 L944.4,265.9 L944.8,265.6 L945.2,266.0 L945.6,264.8 L946.0,262.9 L946.4,261.5 L946.8,260.7 L947.2,260.3 L947.6,260.5 L948.0,264.3 L948.4,263.3 L948.8,262.2 L949.2,261.3 L949.6,260.7 L950.0,260.9 L950.4,262.2 L950.8,263.3 L951.2,262.7 L951.6,262.6 L952.0,262.6 L952.4,262.9 L952.8,263.3 L953.2,264.1 L953.6,262.2 L954.0,259.3 L954.4,258.2 L954.8,257.6 L955.2,257.8 L955.6,259.2 L956.0,261.3 L956.4,260.2 L956.8,258.2 L957.2,257.1 L957.6,257.1 L958.0,260.4 L958.4,264.4 L958.8,267.4 L959.2,267.8 L959.6,269.3 L960.0,271.3 L960.4,269.2 L960.8,267.6 L961.2,269.0 L961.6,270.2 L962.0,270.2 L962.4,270.4 L962.8,270.7 L963.2,271.1 L963.6,271.6 L964.0,272.2 L964.4,271.1 L964.8,271.1 L965.2,272.0 L965.6,273.5 L966.0,274.7 L966.4,275.1 L966.8,275.5 L967.2,276.0 L967.6,276.1 L968.0,276.1 L968.4,276.1 L968.8,276.1 L969.2,276.1 L969.6,276.1 L970.0,276.1 L970.4,276.1 L970.8,276.1 L971.2,276.1 L971.6,276.1 L972.0,276.1 L972.4,276.1 L972.8,276.1 L973.2,276.1 L973.6,276.1 L974.0,276.1 L974.4,276.1 L974.8,275.0 L975.2,273.2 L975.6,271.0 L976.0,269.0 L976.4,267.1 L976.8,265.5 L977.2,264.9 L977.6,261.0 L978.0,257.9 L978.4,255.1 L978.8,252.4 L979.2,250.1 L979.6,248.8 L980.0,253.7 L980.4,249.6 L980.8,246.2 L981.2,243.8 L981.6,241.7 L982.0,240.0 L982.4,239.2 L982.8,241.5 L983.2,235.2 L983.6,233.8 L984.0,234.0 L984.4,234.8 L984.8,236.2 L985.2,238.5 L985.6,242.1 L986.0,246.6 L986.4,245.4 L986.8,244.7 L987.2,244.4 L987.6,244.3 L988.0,244.7 L988.4,245.3 L988.8,237.9 L989.2,235.7 L989.6,234.2 L990.0,233.6 L990.4,233.6 L990.8,235.2 L991.2,249.0 L991.6,241.7 L992.0,238.8 L992.4,237.1 L992.8,236.5 L993.2,238.1 L993.6,243.2 L994.0,226.0 L994.4,222.3 L994.8,219.9 L995.2,221.4 L995.6,224.0 L996.0,228.7 L996.4,240.9 L996.8,240.4 L997.2,240.9 L997.6,240.9 L998.0,240.2 L998.4,240.0 L998.8,240.6 L999.2,244.2 L999.6,239.3 L1000.0,236.1 L1000.4,234.3 L1000.8,233.4 L1001.2,234.6 L1001.6,237.0 L1002.0,222.7 L1002.4,217.1 L1002.8,213.7 L1003.2,211.6 L1003.6,212.3 L1004.0,214.5 L1004.4,214.1 L1004.8,208.8 L1005.2,207.3 L1005.6,206.5 L1006.0,206.9 L1006.4,208.0 L1006.8,209.9 L1007.2,217.3 L1007.6,216.9 L1008.0,215.4 L1008.4,216.3 L1008.8,219.1 L1009.2,222.8 L1009.6,228.9 L1010.0,219.7 L1010.4,219.1 L1010.8,218.9 L1011.2,219.0 L1011.6,219.4 L1012.0,220.2 L1012.4,222.0 L1012.8,238.0 L1013.2,237.2 L1013.6,237.6 L1014.0,238.5 L1014.4,240.2 L1014.8,242.4 L1015.2,249.7 L1015.6,245.7 L1016.0,244.2 L1016.4,244.8 L1016.8,246.4 L1017.2,249.6 L1017.6,246.3 L1018.0,239.8 L1018.4,239.1 L1018.8,239.2 L1019.2,240.5 L1019.6,242.9 L1020.0,246.1 L1020.4,253.4 L1020.8,249.3 L1021.2,248.5 L1021.6,249.3 L1022.0,250.7 L1022.4,252.7 L1022.8,256.3 L1023.2,261.4 L1023.6,261.3 L1024.0,261.5 L1024.4,261.9 L1024.8,262.3 L1025.2,262.9 L1025.6,263.5 L1026.0,262.4 L1026.4,260.3 L1026.8,260.1 L1027.2,260.7 L1027.6,262.3 L1028.0,265.7 L1028.4,267.2 L1028.8,266.6 L1029.2,266.2 L1029.6,266.4 L1030.0,266.5 L1030.4,267.2 L1030.8,269.2 L1031.2,263.5 L1031.6,262.6 L1032.0,262.1 L1032.4,262.0 L1032.8,262.1 L1033.2,262.4 L1033.6,263.1 L1034.0,262.2 L1034.4,261.8 L1034.8,261.5 L1035.2,261.3 L1035.6,261.2 L1036.0,261.4 L1036.4,263.8 L1036.8,262.4 L1037.2,263.5 L1037.6,265.3 L1038.0,267.5 L1038.4,269.8 L1038.8,273.0 L1039.2,273.7 L1039.6,275.1 L1040.0,275.1 L1040.4,275.2 L1040.8,275.3 L1041.2,275.4 L1041.6,274.8 L1042.0,274.8 L1042.4,274.9 L1042.8,275.0 L1043.2,275.0 L1043.6,275.1 L1044.0,275.2 L1044.4,275.2 L1044.8,275.3 L1045.2,275.4 L1045.6,274.0 L1046.0,268.7 L1046.4,265.4 L1046.8,263.3 L1047.2,262.1 L1047.6,266.8 L1048.0,271.9 L1048.4,274.0 L1048.8,274.7 L1049.2,275.2 L1049.6,275.2 L1050.0,275.1 L1050.4,275.1 L1050.8,275.2 L1051.2,275.3 L1051.6,275.6 L1052.0,275.3 L1052.4,275.0 L1052.8,274.9 L1053.2,275.0 L1053.6,274.8 L1054.0,274.8 L1054.4,274.8 L1054.8,274.9 L1055.2,274.9 L1055.6,274.9 L1056.0,275.0 L1056.4,275.0 L1056.8,275.0 L1057.2,275.1 L1057.6,275.1 L1058.0,274.2 L1058.4,271.7 L1058.8,269.6 L1059.2,269.5 L1059.6,271.3 L1060.0,273.2 L1060.4,275.4 L1060.8,275.6 L1061.2,275.7 L1061.6,275.9 L1062.0,276.0 L1062.4,276.1 L1062.8,276.3 L1063.2,276.3 L1063.6,276.3 L1064.0,276.3 L1064.4,276.4 L1064.8,276.4 L1065.2,276.4 L1065.6,276.4 L1066.0,276.4 L1066.4,276.5 L1066.8,276.5 L1067.2,276.5 L1067.6,276.5 L1068.0,276.6 L1068.4,276.6 L1068.8,276.6 L1069.2,276.6 L1069.6,276.6 L1070.0,276.7 L1070.4,276.7 L1070.8,276.7 L1071.2,276.7 L1071.6,276.8 L1072.0,276.8 L1072.4,276.8 L1072.8,276.8 L1073.2,276.8 L1073.6,276.9 L1074.0,276.9 L1074.4,276.9 L1074.8,276.9 L1075.2,276.9 L1075.6,276.9 L1076.0,276.9 L1076.4,276.9 L1076.8,276.9 L1077.2,276.9 L1077.6,276.9 L1078.0,276.9 L1078.4,276.9 L1078.8,276.9 L1079.2,276.9 L1079.6,276.9 L1080.0,276.9 L1080.4,276.9 L1080.8,276.9 L1081.2,276.9 L1081.6,276.9 L1082.0,276.9 L1082.4,276.9 L1082.8,276.9 L1083.2,276.9 L1083.6,276.9 L1084.0,276.9 L1084.4,276.9 L1084.8,276.9 L1085.2,276.9 L1085.6,276.9 L1086.0,276.9 L1086.4,276.9 L1086.8,276.9 L1087.2,276.9 L1087.6,276.9 L1088.0,276.9 L1088.4,276.9 L1088.8,276.9 L1089.2,276.9 L1089.6,276.9 L1090.0,276.9 L1090.4,276.9 L1090.8,276.9 L1091.2,276.9 L1091.6,276.9 L1092.0,276.9 L1092.4,276.9 L1092.8,276.9 L1093.2,276.9 L1093.6,276.9 L1094.0,276.9 L1094.4,276.9 L1094.8,276.9 L1095.2,276.9 L1095.6,276.9 L1096.0,276.9 L1096.4,276.9 L1096.8,276.9 L1097.2,276.9 L1097.6,276.9 L1098.0,276.9 L1098.4,276.9 L1098.8,276.9 L1099.2,276.9 L1099.6,276.9 L1100.0,276.9 L1100.4,276.9 L1100.8,276.9 L1101.2,276.9 L1101.6,276.9 L1102.0,276.9 L1102.4,276.9 L1102.8,276.9 L1103.2,276.9 L1103.6,276.9 L1104.0,276.9 L1104.4,276.9 L1104.8,276.9 L1105.2,276.9 L1105.6,276.9 L1106.0,276.9 L1106.4,276.9 L1106.8,276.9 L1107.2,276.9 L1107.6,276.9 L1108.0,276.9 L1108.4,276.9 L1108.8,276.9 L1109.2,276.9 L1109.6,276.9 L1110.0,276.9 L1110.4,276.9 L1110.8,276.9 L1111.2,276.9 L1111.6,276.9 L1112.0,276.9 L1112.4,276.9 L1112.8,276.9 L1113.2,276.9 L1113.6,276.9 L1114.0,276.9 L1114.4,276.9 L1114.8,276.9 L1115.2,276.9 L1115.6,276.9 L1116.0,276.9 L1116.4,276.9 L1116.8,276.9 L1117.2,276.9 L1117.6,276.9 L1118.0,276.9 L1118.4,276.9 L1118.8,276.9 L1119.2,276.9 L1119.6,276.9 L1120.0,276.9 L1120.4,276.9 L1120.8,276.9 L1121.2,276.9 L1121.6,276.9 L1122.0,276.9 L1122.4,276.9 L1122.8,276.9 L1123.2,276.9 L1123.6,276.9 L1124.0,276.9 L1124.4,276.9 L1124.8,276.9 L1125.2,276.9 L1125.6,276.9 L1126.0,276.9 L1126.4,276.9 L1126.8,276.9 L1127.2,276.9 L1127.6,276.9 L1128.0,276.9 L1128.4,276.9 L1128.8,276.9 L1129.2,276.9 L1129.6,276.9 L1130.0,276.9 L1130.4,276.9 L1130.8,276.9 L1131.2,276.9 L1131.6,276.9 L1132.0,276.9 L1132.4,276.9 L1132.8,276.9 L1133.2,276.9 L1133.6,276.9 L1134.0,276.9 L1134.4,276.9 L1134.8,276.9 L1135.2,276.9 L1135.6,276.9 L1136.0,276.9 L1136.4,276.9 L1136.8,276.9 L1137.2,276.9 L1137.6,276.9 L1138.0,276.9 L1138.4,276.9 L1138.8,276.9 L1139.2,276.9 L1139.6,276.9 L1140.0,276.9 L1140.4,276.9 L1140.8,276.9 L1141.2,276.9 L1141.6,276.9 L1142.0,276.9 L1142.4,276.9 L1142.8,276.9 L1143.2,276.9 L1143.6,276.9 L1144.0,276.9 L1144.4,276.9 L1144.8,276.9 L1145.2,276.9 L1145.6,276.9 L1146.0,276.9 L1146.4,276.9 L1146.8,276.9 L1147.2,276.9 L1147.6,276.9 L1148.0,276.9 L1148.4,276.9 L1148.8,276.9 L1149.2,276.9 L1149.6,276.9 L1150.0,276.9 L1150.4,276.9 L1150.8,276.9 L1151.2,276.9 L1151.6,276.9 L1152.0,276.9 L1152.4,276.9 L1152.8,276.9 L1153.2,276.9 L1153.6,276.9 L1154.0,276.9 L1154.4,276.9 L1154.8,276.9 L1155.2,276.9 L1155.6,276.9 L1156.0,276.9 L1156.4,276.9 L1156.8,276.9 L1157.2,276.9 L1157.6,276.9 L1158.0,276.9 L1158.4,276.9 L1158.8,276.9 L1159.2,276.9 L1159.6,276.9 L1160.0,276.9 L1160.4,276.9 L1160.8,276.9 L1161.2,276.9 L1161.6,276.9 L1162.0,276.9 L1162.4,276.9 L1162.8,276.9 L1163.2,276.9 L1163.6,276.9 L1164.0,276.9 L1164.4,276.9 L1164.8,276.9 L1165.2,276.9 L1165.6,276.9 L1166.0,276.9 L1166.4,276.9 L1166.8,276.9 L1167.2,276.9 L1167.6,276.9 L1168.0,276.9 L1168.4,276.9 L1168.8,276.9 L1169.2,276.9 L1169.6,276.9 L1170.0,276.9 L1170.4,276.9 L1170.8,276.9 L1171.2,276.9 L1171.6,276.9 L1172.0,276.9 L1172.4,276.9 L1172.8,276.9 L1173.2,276.9 L1173.6,276.9 L1174.0,276.9 L1174.4,276.9 L1174.8,276.9 L1175.2,276.9 L1175.6,276.9 L1176.0,276.9 L1176.4,276.9 L1176.8,276.9 L1176.8,278.6 L1176.4,278.6 L1176.0,278.6 L1175.6,278.6 L1175.2,278.6 L1174.8,278.6 L1174.4,278.6 L1174.0,278.6 L1173.6,278.6 L1173.2,278.6 L1172.8,278.6 L1172.4,278.6 L1172.0,278.6 L1171.6,278.6 L1171.2,278.6 L1170.8,278.6 L1170.4,278.6 L1170.0,278.6 L1169.6,278.6 L1169.2,278.6 L1168.8,278.6 L1168.4,278.6 L1168.0,278.6 L1167.6,278.6 L1167.2,278.6 L1166.8,278.6 L1166.4,278.6 L1166.0,278.6 L1165.6,278.6 L1165.2,278.6 L1164.8,278.6 L1164.4,278.6 L1164.0,278.6 L1163.6,278.6 L1163.2,278.6 L1162.8,278.6 L1162.4,278.6 L1162.0,278.6 L1161.6,278.6 L1161.2,278.6 L1160.8,278.6 L1160.4,278.6 L1160.0,278.6 L1159.6,278.6 L1159.2,278.6 L1158.8,278.6 L1158.4,278.6 L1158.0,278.6 L1157.6,278.6 L1157.2,278.6 L1156.8,278.6 L1156.4,278.6 L1156.0,278.6 L1155.6,278.6 L1155.2,278.6 L1154.8,278.6 L1154.4,278.6 L1154.0,278.6 L1153.6,278.6 L1153.2,278.6 L1152.8,278.6 L1152.4,278.6 L1152.0,278.6 L1151.6,278.6 L1151.2,278.6 L1150.8,278.6 L1150.4,278.6 L1150.0,278.6 L1149.6,278.6 L1149.2,278.6 L1148.8,278.6 L1148.4,278.6 L1148.0,278.6 L1147.6,278.6 L1147.2,278.6 L1146.8,278.6 L1146.4,278.6 L1146.0,278.6 L1145.6,278.6 L1145.2,278.6 L1144.8,278.6 L1144.4,278.6 L1144.0,278.6 L1143.6,278.6 L1143.2,278.6 L1142.8,278.6 L1142.4,278.6 L1142.0,278.6 L1141.6,278.6 L1141.2,278.6 L1140.8,278.6 L1140.4,278.6 L1140.0,278.6 L1139.6,278.6 L1139.2,278.6 L1138.8,278.6 L1138.4,278.6 L1138.0,278.6 L1137.6,278.6 L1137.2,278.6 L1136.8,278.6 L1136.4,278.6 L1136.0,278.6 L1135.6,278.6 L1135.2,278.6 L1134.8,278.6 L1134.4,278.6 L1134.0,278.6 L1133.6,278.6 L1133.2,278.6 L1132.8,278.6 L1132.4,278.6 L1132.0,278.6 L1131.6,278.6 L1131.2,278.6 L1130.8,278.6 L1130.4,278.6 L1130.0,278.6 L1129.6,278.6 L1129.2,278.6 L1128.8,278.6 L1128.4,278.6 L1128.0,278.6 L1127.6,278.6 L1127.2,278.6 L1126.8,278.6 L1126.4,278.6 L1126.0,278.6 L1125.6,278.6 L1125.2,278.6 L1124.8,278.6 L1124.4,278.6 L1124.0,278.6 L1123.6,278.6 L1123.2,278.6 L1122.8,278.6 L1122.4,278.6 L1122.0,278.6 L1121.6,278.6 L1121.2,278.6 L1120.8,278.6 L1120.4,278.6 L1120.0,278.6 L1119.6,278.6 L1119.2,278.6 L1118.8,278.6 L1118.4,278.6 L1118.0,278.6 L1117.6,278.6 L1117.2,278.6 L1116.8,278.6 L1116.4,278.6 L1116.0,278.6 L1115.6,278.6 L1115.2,278.6 L1114.8,278.6 L1114.4,278.6 L1114.0,278.6 L1113.6,278.6 L1113.2,278.6 L1112.8,278.6 L1112.4,278.6 L1112.0,278.6 L1111.6,278.6 L1111.2,278.6 L1110.8,278.6 L1110.4,278.6 L1110.0,278.6 L1109.6,278.6 L1109.2,278.6 L1108.8,278.6 L1108.4,278.6 L1108.0,278.6 L1107.6,278.6 L1107.2,278.6 L1106.8,278.6 L1106.4,278.6 L1106.0,278.6 L1105.6,278.6 L1105.2,278.6 L1104.8,278.6 L1104.4,278.6 L1104.0,278.6 L1103.6,278.6 L1103.2,278.6 L1102.8,278.6 L1102.4,278.6 L1102.0,278.6 L1101.6,278.6 L1101.2,278.6 L1100.8,278.6 L1100.4,278.6 L1100.0,278.6 L1099.6,278.6 L1099.2,278.6 L1098.8,278.6 L1098.4,278.6 L1098.0,278.6 L1097.6,278.6 L1097.2,278.6 L1096.8,278.6 L1096.4,278.6 L1096.0,278.6 L1095.6,278.6 L1095.2,278.6 L1094.8,278.6 L1094.4,278.6 L1094.0,278.6 L1093.6,278.6 L1093.2,278.6 L1092.8,278.6 L1092.4,278.6 L1092.0,278.6 L1091.6,278.6 L1091.2,278.6 L1090.8,278.6 L1090.4,278.6 L1090.0,278.6 L1089.6,278.6 L1089.2,278.6 L1088.8,278.6 L1088.4,278.6 L1088.0,278.6 L1087.6,278.6 L1087.2,278.6 L1086.8,278.6 L1086.4,278.6 L1086.0,278.6 L1085.6,278.6 L1085.2,278.6 L1084.8,278.6 L1084.4,278.6 L1084.0,278.6 L1083.6,278.6 L1083.2,278.6 L1082.8,278.6 L1082.4,278.6 L1082.0,278.6 L1081.6,278.6 L1081.2,278.6 L1080.8,278.6 L1080.4,278.6 L1080.0,278.6 L1079.6,278.6 L1079.2,278.6 L1078.8,278.6 L1078.4,278.6 L1078.0,278.6 L1077.6,278.6 L1077.2,278.6 L1076.8,278.6 L1076.4,278.6 L1076.0,278.6 L1075.6,278.6 L1075.2,278.6 L1074.8,278.6 L1074.4,278.6 L1074.0,278.6 L1073.6,278.6 L1073.2,278.7 L1072.8,278.7 L1072.4,278.7 L1072.0,278.7 L1071.6,278.7 L1071.2,278.8 L1070.8,278.8 L1070.4,278.8 L1070.0,278.8 L1069.6,278.9 L1069.2,278.9 L1068.8,278.9 L1068.4,278.9 L1068.0,278.9 L1067.6,279.0 L1067.2,279.0 L1066.8,279.0 L1066.4,279.0 L1066.0,279.1 L1065.6,279.1 L1065.2,279.1 L1064.8,279.1 L1064.4,279.1 L1064.0,279.2 L1063.6,279.2 L1063.2,279.2 L1062.8,279.2 L1062.4,279.3 L1062.0,279.4 L1061.6,279.5 L1061.2,279.6 L1060.8,279.7 L1060.4,279.7 L1060.0,283.5 L1059.6,287.5 L1059.2,289.1 L1058.8,288.2 L1058.4,284.6 L1058.0,281.1 L1057.6,280.4 L1057.2,280.4 L1056.8,280.5 L1056.4,280.5 L1056.0,280.5 L1055.6,280.6 L1055.2,280.6 L1054.8,280.6 L1054.4,280.7 L1054.0,280.7 L1053.6,280.7 L1053.2,279.8 L1052.8,279.9 L1052.4,280.0 L1052.0,280.1 L1051.6,280.1 L1051.2,280.1 L1050.8,279.9 L1050.4,280.1 L1050.0,280.3 L1049.6,280.4 L1049.2,280.6 L1048.8,280.9 L1048.4,281.1 L1048.0,281.7 L1047.6,283.0 L1047.2,284.5 L1046.8,284.4 L1046.4,283.7 L1046.0,281.8 L1045.6,280.0 L1045.2,280.1 L1044.8,280.2 L1044.4,280.3 L1044.0,280.3 L1043.6,280.4 L1043.2,280.5 L1042.8,280.5 L1042.4,280.6 L1042.0,280.7 L1041.6,280.7 L1041.2,280.7 L1040.8,280.6 L1040.4,280.4 L1040.0,279.9 L1039.6,280.1 L1039.2,281.6 L1038.8,283.4 L1038.4,284.9 L1038.0,286.1 L1037.6,286.7 L1037.2,288.9 L1036.8,290.4 L1036.4,290.3 L1036.0,290.0 L1035.6,289.7 L1035.2,289.2 L1034.8,288.5 L1034.4,290.0 L1034.0,290.6 L1033.6,291.0 L1033.2,291.0 L1032.8,290.5 L1032.4,289.5 L1032.0,287.9 L1031.6,288.3 L1031.2,288.5 L1030.8,288.5 L1030.4,288.3 L1030.0,287.9 L1029.6,287.2 L1029.2,291.5 L1028.8,292.2 L1028.4,292.7 L1028.0,293.1 L1027.6,293.3 L1027.2,293.4 L1026.8,293.4 L1026.4,295.0 L1026.0,296.0 L1025.6,296.6 L1025.2,296.9 L1024.8,297.0 L1024.4,296.8 L1024.0,290.4 L1023.6,291.6 L1023.2,292.3 L1022.8,292.9 L1022.4,293.6 L1022.0,294.0 L1021.6,294.0 L1021.2,293.6 L1020.8,294.9 L1020.4,297.0 L1020.0,298.4 L1019.6,299.1 L1019.2,298.4 L1018.8,296.9 L1018.4,298.0 L1018.0,300.6 L1017.6,302.4 L1017.2,304.0 L1016.8,305.2 L1016.4,305.8 L1016.0,305.9 L1015.6,309.7 L1015.2,315.9 L1014.8,319.5 L1014.4,322.1 L1014.0,323.4 L1013.6,323.5 L1013.2,319.6 L1012.8,307.7 L1012.4,312.1 L1012.0,314.6 L1011.6,315.7 L1011.2,314.6 L1010.8,312.8 L1010.4,305.8 L1010.0,331.6 L1009.6,333.9 L1009.2,335.9 L1008.8,337.2 L1008.4,337.9 L1008.0,336.3 L1007.6,331.1 L1007.2,340.1 L1006.8,343.4 L1006.4,342.5 L1006.0,339.6 L1005.6,333.0 L1005.2,328.7 L1004.8,332.5 L1004.4,333.0 L1004.0,333.0 L1003.6,332.3 L1003.2,331.0 L1002.8,327.8 L1002.4,318.8 L1002.0,320.1 L1001.6,320.6 L1001.2,320.0 L1000.8,319.1 L1000.4,317.5 L1000.0,315.1 L999.6,322.6 L999.2,325.3 L998.8,327.2 L998.4,327.2 L998.0,326.1 L997.6,324.1 L997.2,321.0 L996.8,323.1 L996.4,326.7 L996.0,329.3 L995.6,331.0 L995.2,332.2 L994.8,332.2 L994.4,314.4 L994.0,322.3 L993.6,325.1 L993.2,325.3 L992.8,323.8 L992.4,321.5 L992.0,317.7 L991.6,304.3 L991.2,309.9 L990.8,310.9 L990.4,311.0 L990.0,309.7 L989.6,306.9 L989.2,300.2 L988.8,305.5 L988.4,307.4 L988.0,307.7 L987.6,306.8 L987.2,304.6 L986.8,301.9 L986.4,301.7 L986.0,307.1 L985.6,309.0 L985.2,310.4 L984.8,310.3 L984.4,309.2 L984.0,306.3 L983.6,302.0 L983.2,308.4 L982.8,311.4 L982.4,311.6 L982.0,310.1 L981.6,307.5 L981.2,303.4 L980.8,299.8 L980.4,299.9 L980.0,299.0 L979.6,297.5 L979.2,295.8 L978.8,293.7 L978.4,291.5 L978.0,290.6 L977.6,290.0 L977.2,289.2 L976.8,288.1 L976.4,286.6 L976.0,284.7 L975.6,283.2 L975.2,281.9 L974.8,280.3 L974.4,279.4 L974.0,279.4 L973.6,279.4 L973.2,279.4 L972.8,279.4 L972.4,279.4 L972.0,279.4 L971.6,279.4 L971.2,279.4 L970.8,279.4 L970.4,279.4 L970.0,279.4 L969.6,279.4 L969.2,279.4 L968.8,279.4 L968.4,279.4 L968.0,279.4 L967.6,279.4 L967.2,279.5 L966.8,280.0 L966.4,280.4 L966.0,279.9 L965.6,281.3 L965.2,283.5 L964.8,284.9 L964.4,285.1 L964.0,285.2 L963.6,285.2 L963.2,284.9 L962.8,284.1 L962.4,285.9 L962.0,286.7 L961.6,287.0 L961.2,287.0 L960.8,286.5 L960.4,284.4 L960.0,283.2 L959.6,284.4 L959.2,285.4 L958.8,286.3 L958.4,287.0 L958.0,287.4 L957.6,291.4 L957.2,292.7 L956.8,293.4 L956.4,293.7 L956.0,293.4 L955.6,288.7 L955.2,290.1 L954.8,291.0 L954.4,291.5 L954.0,291.8 L953.6,291.9 L953.2,291.4 L952.8,289.1 L952.4,291.6 L952.0,293.2 L951.6,293.9 L951.2,294.3 L950.8,294.1 L950.4,292.9 L950.0,295.0 L949.6,297.5 L949.2,297.8 L948.8,297.2 L948.4,296.2 L948.0,294.3 L947.6,291.7 L947.2,292.9 L946.8,293.7 L946.4,293.8 L946.0,293.3 L945.6,292.0 L945.2,290.2 L944.8,286.9 L944.4,287.2 L944.0,287.1 L943.6,286.6 L943.2,285.9 L942.8,284.8 L942.4,282.7 L942.0,284.8 L941.6,285.3 L941.2,285.6 L940.8,285.8 L940.4,285.8 L940.0,285.5 L939.6,286.6 L939.2,289.5 L938.8,292.3 L938.4,294.7 L938.0,296.8 L937.6,298.9 L937.2,301.9 L936.8,303.8 L936.4,309.1 L936.0,313.2 L935.6,317.2 L935.2,319.2 L934.8,318.6 L934.4,317.2 L934.0,314.2 L933.6,315.1 L933.2,315.8 L932.8,316.0 L932.4,315.9 L932.0,315.5 L931.6,314.7 L931.2,310.8 L930.8,315.6 L930.4,317.1 L930.0,317.6 L929.6,315.7 L929.2,309.8 L928.8,313.5 L928.4,317.0 L928.0,318.4 L927.6,319.0 L927.2,318.2 L926.8,315.4 L926.4,310.6 L926.0,313.1 L925.6,315.1 L925.2,315.0 L924.8,313.8 L924.4,311.7 L924.0,308.6 L923.6,307.9 L923.2,316.8 L922.8,319.6 L922.4,319.3 L922.0,317.4 L921.6,313.3 L921.2,297.9 L920.8,300.6 L920.4,300.5 L920.0,299.6 L919.6,298.0 L919.2,297.3 L918.8,296.8 L918.4,293.4 L918.0,303.1 L917.6,306.5 L917.2,308.8 L916.8,308.4 L916.4,306.2 L916.0,301.8 L915.6,302.1 L915.2,299.5 L914.8,292.3 L914.4,284.4 L914.0,279.7 L913.6,279.7 L913.2,279.7 L912.8,279.7 L912.4,279.7 L912.0,279.7 L911.6,279.7 L911.2,279.7 L910.8,279.7 L910.4,279.7 L910.0,279.7 L909.6,279.7 L909.2,279.7 L908.8,279.7 L908.4,279.7 L908.0,279.7 L907.6,279.8 L907.2,279.9 L906.8,280.0 L906.4,280.0 L906.0,280.1 L905.6,280.2 L905.2,280.3 L904.8,280.4 L904.4,280.4 L904.0,280.5 L903.6,280.6 L903.2,280.7 L902.8,280.7 L902.4,280.8 L902.0,280.7 L901.6,280.6 L901.2,280.8 L900.8,281.4 L900.4,281.9 L900.0,282.2 L899.6,282.6 L899.2,281.2 L898.8,282.3 L898.4,283.1 L898.0,283.5 L897.6,283.6 L897.2,283.4 L896.8,282.5 L896.4,285.6 L896.0,287.7 L895.6,289.7 L895.2,291.2 L894.8,292.1 L894.4,291.8 L894.0,290.8 L893.6,294.8 L893.2,297.9 L892.8,299.7 L892.4,300.6 L892.0,299.6 L891.6,295.1 L891.2,298.1 L890.8,299.6 L890.4,300.5 L890.0,300.9 L889.6,300.9 L889.2,299.4 L888.8,303.2 L888.4,305.9 L888.0,308.0 L887.6,309.7 L887.2,310.8 L886.8,311.2 L886.4,309.4 L886.0,312.8 L885.6,315.5 L885.2,317.5 L884.8,316.8 L884.4,313.6 L884.0,310.1 L883.6,306.4 L883.2,301.9 L882.8,300.5 L882.4,297.9 L882.0,296.6 L881.6,295.1 L881.2,293.5 L880.8,291.4 L880.4,289.6 L880.0,292.2 L879.6,294.4 L879.2,296.0 L878.8,296.6 L878.4,296.7 L878.0,295.2 L877.6,295.0 L877.2,298.1 L876.8,299.7 L876.4,300.0 L876.0,298.7 L875.6,295.8 L875.2,294.3 L874.8,297.0 L874.4,298.7 L874.0,299.6 L873.6,299.8 L873.2,298.4 L872.8,294.2 L872.4,307.1 L872.0,309.0 L871.6,309.9 L871.2,309.0 L870.8,306.6 L870.4,302.7 L870.0,305.3 L869.6,304.7 L869.2,303.8 L868.8,302.6 L868.4,301.3 L868.0,299.8 L867.6,298.0 L867.2,295.9 L866.8,296.0 L866.4,295.1 L866.0,293.9 L865.6,292.0 L865.2,289.7 L864.8,287.7 L864.4,288.7 L864.0,290.8 L863.6,292.1 L863.2,292.4 L862.8,292.3 L862.4,293.1 L862.0,298.6 L861.6,303.9 L861.2,309.1 L860.8,313.9 L860.4,317.8 L860.0,320.4 L859.6,329.2 L859.2,334.3 L858.8,337.8 L858.4,340.2 L858.0,341.9 L857.6,342.6 L857.2,339.8 L856.8,342.2 L856.4,347.6 L856.0,349.8 L855.6,350.9 L855.2,349.4 L854.8,345.3 L854.4,335.2 L854.0,331.5 L853.6,334.1 L853.2,335.7 L852.8,336.3 L852.4,335.9 L852.0,333.9 L851.6,336.7 L851.2,339.5 L850.8,341.3 L850.4,342.2 L850.0,342.5 L849.6,341.3 L849.2,333.2 L848.8,343.0 L848.4,347.7 L848.0,349.2 L847.6,349.2 L847.2,343.9 L846.8,336.3 L846.4,344.8 L846.0,353.4 L845.6,356.8 L845.2,359.1 L844.8,358.7 L844.4,352.8 L844.0,348.6 L843.6,352.8 L843.2,352.8 L842.8,352.1 L842.4,350.3 L842.0,347.4 L841.6,341.3 L841.2,365.6 L840.8,367.4 L840.4,371.8 L840.0,378.1 L839.6,381.3 L839.2,382.4 L838.8,358.0 L838.4,369.3 L838.0,376.3 L837.6,354.7 L837.2,328.4 L836.8,302.0 L836.4,279.5 L836.0,279.1 L835.6,279.1 L835.2,279.1 L834.8,279.1 L834.4,279.1 L834.0,279.2 L833.6,279.2 L833.2,279.2 L832.8,279.2 L832.4,279.2 L832.0,279.2 L831.6,279.3 L831.2,279.3 L830.8,279.3 L830.4,279.3 L830.0,279.3 L829.6,279.3 L829.2,279.3 L828.8,279.4 L828.4,279.4 L828.0,279.4 L827.6,279.4 L827.2,280.2 L826.8,281.3 L826.4,282.3 L826.0,282.9 L825.6,282.3 L825.2,283.5 L824.8,284.4 L824.4,285.3 L824.0,285.6 L823.6,285.1 L823.2,284.0 L822.8,285.8 L822.4,286.0 L822.0,286.2 L821.6,286.2 L821.2,286.0 L820.8,285.7 L820.4,284.6 L820.0,285.5 L819.6,285.8 L819.2,285.8 L818.8,285.7 L818.4,285.5 L818.0,285.0 L817.6,284.6 L817.2,285.3 L816.8,285.4 L816.4,285.4 L816.0,285.2 L815.6,284.9 L815.2,285.3 L814.8,285.7 L814.4,285.8 L814.0,285.9 L813.6,285.9 L813.2,285.8 L812.8,285.6 L812.4,283.2 L812.0,284.3 L811.6,284.6 L811.2,284.7 L810.8,284.7 L810.4,284.7 L810.0,285.1 L809.6,288.6 L809.2,290.6 L808.8,291.9 L808.4,292.2 L808.0,292.2 L807.6,290.7 L807.2,292.5 L806.8,294.5 L806.4,295.8 L806.0,296.7 L805.6,297.1 L805.2,296.7 L804.8,292.1 L804.4,294.7 L804.0,296.4 L803.6,297.2 L803.2,297.1 L802.8,295.6 L802.4,293.3 L802.0,302.3 L801.6,303.3 L801.2,304.0 L800.8,304.6 L800.4,304.9 L800.0,304.8 L799.6,303.6 L799.2,295.7 L798.8,296.2 L798.4,296.4 L798.0,296.1 L797.6,295.3 L797.2,293.2 L796.8,287.9 L796.4,284.6 L796.0,279.6 L795.6,279.1 L795.2,279.1 L794.8,279.1 L794.4,279.1 L794.0,279.1 L793.6,279.1 L793.2,279.1 L792.8,279.1 L792.4,279.1 L792.0,279.1 L791.6,279.1 L791.2,279.1 L790.8,279.1 L790.4,279.1 L790.0,279.1 L789.6,279.1 L789.2,279.1 L788.8,279.1 L788.4,279.1 L788.0,279.1 L787.6,279.1 L787.2,279.1 L786.8,279.1 L786.4,279.1 L786.0,279.1 L785.6,279.1 L785.2,279.1 L784.8,279.1 L784.4,279.1 L784.0,279.1 L783.6,279.1 L783.2,279.1 L782.8,279.1 L782.4,279.1 L782.0,279.1 L781.6,279.1 L781.2,279.1 L780.8,279.1 L780.4,279.1 L780.0,279.1 L779.6,279.1 L779.2,279.2 L778.8,279.3 L778.4,279.5 L778.0,279.6 L777.6,279.8 L777.2,280.0 L776.8,280.1 L776.4,280.3 L776.0,280.4 L775.6,280.6 L775.2,279.7 L774.8,279.9 L774.4,280.1 L774.0,280.5 L773.6,280.8 L773.2,280.7 L772.8,282.3 L772.4,283.7 L772.0,284.6 L771.6,285.3 L771.2,285.8 L770.8,286.1 L770.4,285.4 L770.0,287.2 L769.6,288.1 L769.2,288.9 L768.8,289.5 L768.4,289.9 L768.0,290.2 L767.6,290.7 L767.2,287.1 L766.8,289.5 L766.4,291.2 L766.0,292.6 L765.6,293.8 L765.2,293.1 L764.8,291.5 L764.4,289.5 L764.0,293.3 L763.6,293.1 L763.2,292.4 L762.8,291.3 L762.4,287.8 L762.0,284.3 L761.6,280.8 L761.2,280.5 L760.8,280.7 L760.4,280.5 L760.0,280.7 L759.6,280.7 L759.2,280.6 L758.8,281.0 L758.4,281.4 L758.0,281.6 L757.6,282.2 L757.2,282.9 L756.8,283.3 L756.4,283.8 L756.0,284.0 L755.6,285.2 L755.2,286.1 L754.8,286.9 L754.4,287.5 L754.0,287.8 L753.6,287.9 L753.2,286.2 L752.8,286.9 L752.4,287.2 L752.0,287.3 L751.6,287.4 L751.2,287.5 L750.8,287.4 L750.4,289.5 L750.0,291.2 L749.6,292.4 L749.2,292.9 L748.8,292.8 L748.4,292.4 L748.0,291.2 L747.6,288.6 L747.2,290.8 L746.8,292.2 L746.4,293.0 L746.0,293.2 L745.6,292.4 L745.2,289.9 L744.8,291.8 L744.4,292.4 L744.0,292.7 L743.6,293.0 L743.2,293.0 L742.8,293.1 L742.4,292.8 L742.0,296.2 L741.6,297.2 L741.2,298.0 L740.8,298.4 L740.4,298.3 L740.0,297.6 L739.6,294.6 L739.2,291.1 L738.8,292.5 L738.4,293.2 L738.0,293.3 L737.6,292.7 L737.2,291.3 L736.8,295.1 L736.4,296.9 L736.0,298.0 L735.6,298.5 L735.2,298.5 L734.8,298.3 L734.4,297.4 L734.0,295.6 L733.6,294.0 L733.2,294.7 L732.8,295.7 L732.4,296.8 L732.0,297.8 L731.6,298.3 L731.2,297.7 L730.8,299.3 L730.4,301.9 L730.0,303.5 L729.6,304.5 L729.2,304.1 L728.8,303.0 L728.4,314.9 L728.0,317.7 L727.6,319.6 L727.2,320.9 L726.8,321.0 L726.4,319.8 L726.0,318.2 L725.6,321.6 L725.2,323.2 L724.8,324.2 L724.4,324.2 L724.0,323.0 L723.6,317.4 L723.2,319.2 L722.8,320.2 L722.4,321.0 L722.0,321.5 L721.6,321.7 L721.2,321.5 L720.8,322.4 L720.4,329.6 L720.0,333.1 L719.6,334.4 L719.2,333.8 L718.8,331.4 L718.4,319.2 L718.0,336.1 L717.6,338.6 L717.2,340.5 L716.8,341.5 L716.4,341.1 L716.0,340.3 L715.6,336.3 L715.2,338.5 L714.8,340.3 L714.4,340.8 L714.0,340.5 L713.6,339.7 L713.2,330.6 L712.8,336.5 L712.4,338.5 L712.0,339.2 L711.6,338.8 L711.2,337.0 L710.8,328.9 L710.4,337.5 L710.0,340.4 L709.6,341.5 L709.2,340.9 L708.8,339.3 L708.4,336.4 L708.0,331.3 L707.6,337.2 L707.2,342.5 L706.8,344.9 L706.4,343.8 L706.0,338.8 L705.6,327.2 L705.2,330.7 L704.8,333.0 L704.4,333.8 L704.0,333.6 L703.6,332.2 L703.2,330.0 L702.8,326.8 L702.4,342.2 L702.0,351.9 L701.6,356.4 L701.2,357.4 L700.8,353.7 L700.4,344.7 L700.0,346.1 L699.6,348.4 L699.2,347.9 L698.8,346.6 L698.4,344.0 L698.0,340.7 L697.6,335.7 L697.2,341.7 L696.8,342.1 L696.4,341.0 L696.0,338.9 L695.6,336.3 L695.2,332.7 L694.8,327.9 L694.4,313.2 L694.0,312.5 L693.6,309.3 L693.2,304.2 L692.8,298.1 L692.4,294.4 L692.0,298.0 L691.6,298.5 L691.2,298.7 L690.8,298.5 L690.4,298.3 L690.0,297.9 L689.6,297.5 L689.2,297.0 L688.8,297.4 L688.4,295.8 L688.0,292.4 L687.6,288.9 L687.2,285.3 L686.8,280.6 L686.4,280.3 L686.0,280.6 L685.6,280.9 L685.2,281.1 L684.8,281.1 L684.4,280.6 L684.0,281.5 L683.6,282.3 L683.2,282.8 L682.8,283.3 L682.4,285.1 L682.0,286.7 L681.6,284.9 L681.2,288.4 L680.8,290.9 L680.4,293.2 L680.0,294.9 L679.6,293.6 L679.2,291.1 L678.8,293.7 L678.4,294.5 L678.0,296.3 L677.6,297.9 L677.2,299.2 L676.8,299.9 L676.4,299.1 L676.0,305.3 L675.6,308.5 L675.2,309.3 L674.8,309.4 L674.4,308.3 L674.0,306.3 L673.6,310.0 L673.2,315.1 L672.8,317.2 L672.4,318.6 L672.0,318.8 L671.6,317.5 L671.2,314.6 L670.8,310.5 L670.4,310.3 L670.0,310.4 L669.6,310.1 L669.2,308.9 L668.8,307.2 L668.4,304.4 L668.0,303.0 L667.6,304.3 L667.2,302.4 L666.8,298.9 L666.4,294.7 L666.0,290.1 L665.6,285.4 L665.2,280.7 L664.8,280.1 L664.4,280.7 L664.0,280.5 L663.6,280.3 L663.2,280.1 L662.8,279.9 L662.4,279.8 L662.0,279.9 L661.6,280.1 L661.2,280.2 L660.8,280.3 L660.4,280.5 L660.0,280.6 L659.6,280.4 L659.2,280.7 L658.8,281.0 L658.4,281.2 L658.0,281.3 L657.6,281.1 L657.2,280.8 L656.8,281.0 L656.4,281.2 L656.0,281.3 L655.6,281.4 L655.2,281.4 L654.8,281.4 L654.4,281.1 L654.0,281.5 L653.6,282.1 L653.2,282.6 L652.8,283.1 L652.4,283.5 L652.0,283.5 L651.6,284.5 L651.2,285.3 L650.8,286.1 L650.4,287.6 L650.0,288.9 L649.6,289.7 L649.2,289.6 L648.8,296.1 L648.4,300.7 L648.0,303.5 L647.6,305.7 L647.2,307.3 L646.8,306.4 L646.4,308.0 L646.0,313.6 L645.6,317.3 L645.2,320.1 L644.8,322.4 L644.4,323.8 L644.0,322.2 L643.6,315.7 L643.2,318.7 L642.8,320.8 L642.4,321.6 L642.0,321.4 L641.6,319.8 L641.2,316.3 L640.8,315.8 L640.4,318.5 L640.0,320.9 L639.6,323.0 L639.2,324.6 L638.8,325.5 L638.4,330.6 L638.0,333.6 L637.6,331.3 L637.2,328.1 L636.8,324.7 L636.4,321.1 L636.0,317.2 L635.6,312.6 L635.2,316.1 L634.8,313.4 L634.4,310.2 L634.0,306.7 L633.6,302.8 L633.2,298.9 L632.8,296.8 L632.4,295.4 L632.0,294.6 L631.6,293.7 L631.2,292.6 L630.8,292.5 L630.4,291.4 L630.0,294.1 L629.6,296.5 L629.2,298.6 L628.8,300.2 L628.4,300.8 L628.0,305.6 L627.6,311.2 L627.2,314.5 L626.8,317.3 L626.4,318.6 L626.0,317.8 L625.6,313.5 L625.2,311.5 L624.8,316.4 L624.4,319.2 L624.0,318.0 L623.6,314.2 L623.2,308.9 L622.8,306.9 L622.4,310.7 L622.0,311.7 L621.6,311.2 L621.2,309.1 L620.8,303.9 L620.4,314.4 L620.0,318.5 L619.6,320.0 L619.2,320.5 L618.8,319.7 L618.4,317.8 L618.0,313.6 L617.6,307.2 L617.2,310.9 L616.8,311.1 L616.4,310.0 L616.0,308.1 L615.6,304.7 L615.2,298.8 L614.8,305.3 L614.4,307.9 L614.0,307.4 L613.6,305.7 L613.2,303.0 L612.8,297.8 L612.4,294.7 L612.0,296.7 L611.6,297.1 L611.2,295.9 L610.8,293.8 L610.4,290.7 L610.0,291.4 L609.6,290.6 L609.2,289.7 L608.8,288.5 L608.4,286.7 L608.0,284.7 L607.6,282.1 L607.2,281.3 L606.8,280.1 L606.4,280.3 L606.0,280.5 L605.6,280.7 L605.2,279.7 L604.8,280.4 L604.4,280.8 L604.0,281.0 L603.6,281.1 L603.2,281.0 L602.8,280.2 L602.4,281.5 L602.0,282.0 L601.6,282.4 L601.2,282.7 L600.8,282.9 L600.4,282.9 L600.0,282.2 L599.6,283.6 L599.2,284.3 L598.8,284.7 L598.4,284.9 L598.0,284.7 L597.6,284.3 L597.2,285.9 L596.8,286.3 L596.4,286.3 L596.0,286.3 L595.6,286.2 L595.2,286.0 L594.8,285.6 L594.4,284.0 L594.0,284.2 L593.6,284.3 L593.2,284.2 L592.8,284.0 L592.4,283.7 L592.0,284.3 L591.6,285.3 L591.2,285.9 L590.8,287.5 L590.4,288.9 L590.0,290.0 L589.6,290.6 L589.2,293.0 L588.8,296.6 L588.4,299.8 L588.0,302.4 L587.6,304.3 L587.2,302.0 L586.8,297.9 L586.4,299.0 L586.0,295.4 L585.6,289.4 L585.2,283.2 L584.8,279.8 L584.4,279.8 L584.0,279.9 L583.6,279.9 L583.2,280.0 L582.8,280.1 L582.4,280.1 L582.0,280.2 L581.6,280.3 L581.2,280.3 L580.8,280.4 L580.4,280.4 L580.0,280.5 L579.6,280.6 L579.2,280.6 L578.8,280.7 L578.4,280.7 L578.0,280.7 L577.6,280.7 L577.2,280.6 L576.8,280.2 L576.4,280.0 L576.0,280.3 L575.6,280.6 L575.2,280.9 L574.8,281.1 L574.4,281.3 L574.0,281.4 L573.6,283.0 L573.2,283.8 L572.8,284.8 L572.4,285.8 L572.0,286.5 L571.6,286.1 L571.2,286.4 L570.8,287.9 L570.4,290.2 L570.0,292.9 L569.6,295.3 L569.2,297.2 L568.8,297.8 L568.4,303.2 L568.0,308.3 L567.6,312.6 L567.2,315.6 L566.8,317.3 L566.4,317.7 L566.0,306.0 L565.6,318.6 L565.2,328.4 L564.8,337.8 L564.4,339.3 L564.0,336.8 L563.6,329.1 L563.2,335.1 L562.8,346.7 L562.4,350.2 L562.0,352.0 L561.6,350.9 L561.2,347.0 L560.8,329.1 L560.4,357.0 L560.0,362.3 L559.6,367.3 L559.2,370.5 L558.8,372.5 L558.4,371.6 L558.0,388.3 L557.6,401.6 L557.2,407.0 L556.8,408.3 L556.4,405.7 L556.0,399.2 L555.6,381.5 L555.2,361.2 L554.8,365.4 L554.4,367.8 L554.0,368.4 L553.6,366.3 L553.2,362.2 L552.8,363.5 L552.4,375.3 L552.0,381.3 L551.6,384.2 L551.2,385.2 L550.8,382.0 L550.4,375.6 L550.0,355.3 L549.6,385.6 L549.2,393.0 L548.8,396.0 L548.4,393.4 L548.0,382.9 L547.6,364.6 L547.2,359.0 L546.8,361.5 L546.4,362.8 L546.0,362.4 L545.6,360.8 L545.2,356.7 L544.8,369.3 L544.4,381.2 L544.0,388.6 L543.6,389.3 L543.2,386.5 L542.8,380.5 L542.4,369.9 L542.0,354.1 L541.6,278.6 L541.2,278.6 L540.8,278.6 L540.4,278.6 L540.0,278.6 L539.6,278.6 L539.2,278.6 L538.8,278.6 L538.4,278.6 L538.0,278.6 L537.6,278.6 L537.2,278.6 L536.8,278.6 L536.4,278.6 L536.0,278.6 L535.6,278.6 L535.2,278.6 L534.8,278.6 L534.4,278.6 L534.0,278.6 L533.6,278.6 L533.2,278.6 L532.8,278.6 L532.4,278.6 L532.0,278.6 L531.6,278.6 L531.2,278.6 L530.8,278.6 L530.4,278.6 L530.0,278.6 L529.6,278.6 L529.2,278.6 L528.8,278.6 L528.4,278.6 L528.0,278.6 L527.6,278.6 L527.2,278.6 L526.8,278.6 L526.4,278.6 L526.0,278.6 L525.6,278.6 L525.2,278.6 L524.8,278.6 L524.4,278.6 L524.0,278.6Z M550.0,173.3H551.5V409.2H550.0Z M555.6,196.0H557.1V408.5H555.6Z M545.8,182.5H547.2V400.0H545.8Z M556.6,193.0H558.1V405.0H556.6Z M621.0,213.0H622.5V325.0H621.0Z M623.6,225.0H625.1V332.3H623.6Z M637.9,216.3H639.4V347.2H637.9Z M675.0,236.9H676.5V310.0H675.0Z M671.0,245.0H672.5V319.0H671.0Z M698.5,202.4H700.0V350.0H698.5Z M700.1,215.0H701.6V362.8H700.1Z M714.0,209.7H715.5V345.0H714.0Z M709.0,220.0H710.5V355.5H709.0Z M765.4,247.8H766.9V295.0H765.4Z M764.5,252.0H766.0V299.2H764.5Z M799.2,235.5H800.8V307.4H799.2Z M837.5,173.9H839.0V408.5H837.5Z M844.1,193.0H845.6V395.0H844.1Z M870.6,245.5H872.1V312.0H870.6Z M884.2,229.6H885.8V324.0H884.2Z M916.4,220.6H917.9V309.0H916.4Z M925.4,226.3H926.9V329.0H925.4Z M949.2,254.4H950.8V301.0H949.2Z M1004.0,206.4H1005.5V341.6H1004.0Z M1006.2,206.4H1007.8V346.2H1006.2Z M994.0,219.6H995.5V335.6H994.0Z M981.8,227.3H983.2V312.4H981.8Z M1046.3,257.0H1047.8V287.5H1046.3Z M1058.7,266.7H1060.2V290.0H1058.7Z" fill="#0d75bf" stroke="#0d75bf" stroke-opacity="0.55" stroke-width="0.7" stroke-linejoin="round"/><path d="M545.2,214.3V352.7M547.6,221.3V360.6M550.4,208.1V385.8M558.4,221.5V316.9M568.8,263.2V302.1M571.6,273.2V283.1M586.8,255.5V301.5M589.2,259.8V283.2M596.4,270.6V283.7M612.8,258.6V297.7M615.6,257.6V304.2M618.0,241.8V301.7M620.8,244.8V293.2M623.6,226.5V313.6M625.6,248.0V318.0M630.8,263.1V284.8M633.6,252.5V300.2M636.0,242.4V295.9M638.4,239.2V329.1M643.6,230.7V323.6M646.4,257.3V295.4M649.2,259.5V295.3M651.6,268.7V283.9M672.0,255.0V298.3M674.8,244.0V306.0M677.6,255.8V289.0M680.4,263.9V287.7M688.0,267.1V288.0M690.4,267.5V295.3M692.8,254.1V295.3M695.6,241.2V300.8M698.0,234.9V334.0M700.8,242.1V316.5M703.6,243.3V305.2M706.4,229.6V310.3M711.2,220.4V338.6M713.6,239.1V319.6M716.4,243.2V299.3M719.2,236.1V306.5M722.0,236.9V321.6M724.4,240.0V313.7M727.2,243.5V294.3M730.0,260.8V301.7M732.8,258.5V290.7M735.6,258.4V290.4M738.0,267.6V285.2M740.8,263.1V284.4M743.2,267.8V291.6M746.0,270.0V284.9M748.8,266.7V288.6M751.2,267.4V287.9M754.0,269.3V282.3M764.8,255.0V289.8M767.6,262.2V289.4M770.0,264.9V281.8M772.4,269.4V280.2M796.8,262.2V292.3M801.6,247.2V287.2M804.0,247.3V294.5M806.8,257.7V288.2M809.6,267.9V288.1M812.8,271.4V285.4M815.2,269.2V283.5M817.2,268.2V284.6M820.0,267.9V281.8M825.6,272.7V284.0M844.4,221.2V324.9M846.8,228.9V365.5M849.6,228.2V364.1M852.4,243.9V353.0M855.2,233.3V315.1M858.0,237.7V315.7M860.8,258.0V309.3M863.2,267.6V284.7M865.6,268.8V288.1M871.2,247.8V304.1M874.0,252.1V294.8M876.4,254.7V294.6M882.0,260.2V287.2M884.4,249.1V307.6M890.0,250.8V300.5M892.8,256.1V289.8M895.6,269.5V284.5M919.2,252.8V292.1M922.0,241.4V310.6M924.4,252.2V312.8M927.2,247.2V301.8M930.0,246.4V302.7M932.8,235.8V302.3M935.2,253.2V292.8M937.6,264.2V294.3M943.2,270.4V286.7M945.6,266.3V291.1M948.4,265.9V291.9M953.6,260.4V291.3M956.4,266.2V288.6M958.8,266.5V286.8M964.4,271.4V282.9M977.6,262.7V288.2M983.2,240.2V309.8M986.0,246.1V294.2M988.8,247.3V309.5M991.2,241.9V306.7M994.0,247.4V301.8M996.4,238.0V303.9M999.2,231.8V304.8M1002.0,233.3V325.8M1004.4,235.6V335.2M1007.6,221.8V304.6M1010.0,239.0V327.6M1015.2,244.7V314.0M1017.6,240.7V298.6M1020.4,248.8V290.7M1023.2,264.4V290.6M1026.0,267.2V285.5M1028.4,265.4V285.8M1036.4,268.5V293.0M1046.8,264.8V280.9" fill="none" stroke="#7dbbe6" stroke-opacity="0.5" stroke-width="0.7"/></svg>
<div class="a" style="left:522px;top:162px;width:657px;height:261px;border:2px solid #6e6e6e"></div>
<div class="a" style="left:522px;top:423px;width:1px;height:2px;background:#3a3a3a"></div>
<div class="a" style="left:522px;top:752px;width:1px;height:3px;background:#3a3a3a"></div>
<div class="a" style="left:590px;top:423px;width:1px;height:2px;background:#3a3a3a"></div>
<div class="a" style="left:590px;top:752px;width:1px;height:3px;background:#3a3a3a"></div>
<div class="a" style="left:659px;top:423px;width:1px;height:2px;background:#3a3a3a"></div>
<div class="a" style="left:659px;top:752px;width:1px;height:3px;background:#3a3a3a"></div>
<div class="a" style="left:728px;top:423px;width:1px;height:2px;background:#3a3a3a"></div>
<div class="a" style="left:728px;top:752px;width:1px;height:3px;background:#3a3a3a"></div>
<div class="a" style="left:797px;top:423px;width:1px;height:2px;background:#3a3a3a"></div>
<div class="a" style="left:797px;top:752px;width:1px;height:3px;background:#3a3a3a"></div>
<div class="a" style="left:866px;top:423px;width:1px;height:2px;background:#3a3a3a"></div>
<div class="a" style="left:866px;top:752px;width:1px;height:3px;background:#3a3a3a"></div>
<div class="a" style="left:935px;top:423px;width:1px;height:2px;background:#3a3a3a"></div>
<div class="a" style="left:935px;top:752px;width:1px;height:3px;background:#3a3a3a"></div>
<div class="a" style="left:1004px;top:423px;width:1px;height:2px;background:#3a3a3a"></div>
<div class="a" style="left:1004px;top:752px;width:1px;height:3px;background:#3a3a3a"></div>
<div class="a" style="left:1073px;top:423px;width:1px;height:2px;background:#3a3a3a"></div>
<div class="a" style="left:1073px;top:752px;width:1px;height:3px;background:#3a3a3a"></div>
<div class="a" style="left:1142px;top:423px;width:1px;height:2px;background:#3a3a3a"></div>
<div class="a" style="left:1142px;top:752px;width:1px;height:3px;background:#3a3a3a"></div>
<div class="a" style="left:519px;top:210px;width:3px;height:1px;background:#3a3a3a"></div>
<div class="a" style="left:519px;top:277px;width:3px;height:1px;background:#3a3a3a"></div>
<div class="a" style="left:519px;top:344px;width:3px;height:1px;background:#3a3a3a"></div>
<div class="a" style="left:519px;top:412px;width:3px;height:1px;background:#3a3a3a"></div>
<span class="t" style="left:519.62px;top:423.54px;font-size:10px;line-height:14px;color:#333;transform:scaleX(1.0000);">0</span>
<span class="t" style="left:519.62px;top:753.53px;font-size:10px;line-height:14px;color:#333;transform:scaleX(1.0000);">0</span>
<span class="t" style="left:584.42px;top:423.54px;font-size:10px;line-height:14px;color:#333;transform:scaleX(1.0000);">0.5</span>
<span class="t" style="left:584.42px;top:753.53px;font-size:10px;line-height:14px;color:#333;transform:scaleX(1.0000);">0.5</span>
<span class="t" style="left:653.40px;top:423.54px;font-size:10px;line-height:14px;color:#333;transform:scaleX(1.0000);">1.0</span>
<span class="t" style="left:653.40px;top:753.53px;font-size:10px;line-height:14px;color:#333;transform:scaleX(1.0000);">1.0</span>
<span class="t" style="left:722.37px;top:423.54px;font-size:10px;line-height:14px;color:#333;transform:scaleX(1.0000);">1.5</span>
<span class="t" style="left:722.37px;top:753.53px;font-size:10px;line-height:14px;color:#333;transform:scaleX(1.0000);">1.5</span>
<span class="t" style="left:791.35px;top:423.54px;font-size:10px;line-height:14px;color:#333;transform:scaleX(1.0000);">2.0</span>
<span class="t" style="left:791.35px;top:753.53px;font-size:10px;line-height:14px;color:#333;transform:scaleX(1.0000);">2.0</span>
<span class="t" style="left:860.32px;top:423.54px;font-size:10px;line-height:14px;color:#333;transform:scaleX(1.0000);">2.5</span>
<span class="t" style="left:860.32px;top:753.53px;font-size:10px;line-height:14px;color:#333;transform:scaleX(1.0000);">2.5</span>
<span class="t" style="left:929.30px;top:423.54px;font-size:10px;line-height:14px;color:#333;transform:scaleX(1.0000);">3.0</span>
<span class="t" style="left:929.30px;top:753.53px;font-size:10px;line-height:14px;color:#333;transform:scaleX(1.0000);">3.0</span>
<span class="t" style="left:998.27px;top:423.54px;font-size:10px;line-height:14px;color:#333;transform:scaleX(1.0000);">3.5</span>
<span class="t" style="left:998.27px;top:753.53px;font-size:10px;line-height:14px;color:#333;transform:scaleX(1.0000);">3.5</span>
<span class="t" style="left:1067.25px;top:423.54px;font-size:10px;line-height:14px;color:#333;transform:scaleX(1.0000);">4.0</span>
<span class="t" style="left:1067.25px;top:753.53px;font-size:10px;line-height:14px;color:#333;transform:scaleX(1.0000);">4.0</span>
<span class="t" style="left:1136.22px;top:423.54px;font-size:10px;line-height:14px;color:#333;transform:scaleX(1.0000);">4.5</span>
<span class="t" style="left:1136.22px;top:753.53px;font-size:10px;line-height:14px;color:#333;transform:scaleX(1.0000);">4.5</span>
<span class="t" style="left:501.70px;top:203.23px;font-size:10px;line-height:14px;color:#333;transform:scaleX(1.0000);">0.5</span>
<span class="t" style="left:510.04px;top:270.54px;font-size:10px;line-height:14px;color:#333;transform:scaleX(1.0000);">0</span>
<span class="t" style="left:498.37px;top:337.84px;font-size:10px;line-height:14px;color:#333;transform:scaleX(1.0000);">-0.5</span>
<span class="t" style="left:498.37px;top:405.14px;font-size:10px;line-height:14px;color:#333;transform:scaleX(1.0000);">-1.0</span>
<span class="t" style="left:827.86px;top:445.54px;font-size:10px;line-height:14px;color:#333;transform:scaleX(1.0000);">Time (s)</span>
<span class="t" style="left:827.86px;top:775.53px;font-size:10px;line-height:14px;color:#333;transform:scaleX(1.0000);">Time (s)</span>
<div class="a" style="left:522px;top:467px;width:657px;height:285px;background:#fff"></div>
<div class="a" style="left:590px;top:479px;width:1px;height:272px;background:#d2d2d2"></div>
<div class="a" style="left:659px;top:479px;width:1px;height:272px;background:#d2d2d2"></div>
<div class="a" style="left:728px;top:479px;width:1px;height:272px;background:#d2d2d2"></div>
<div class="a" style="left:797px;top:479px;width:1px;height:272px;background:#d2d2d2"></div>
<div class="a" style="left:866px;top:479px;width:1px;height:272px;background:#d2d2d2"></div>
<div class="a" style="left:935px;top:479px;width:1px;height:272px;background:#d2d2d2"></div>
<div class="a" style="left:1004px;top:479px;width:1px;height:272px;background:#d2d2d2"></div>
<div class="a" style="left:1073px;top:479px;width:1px;height:272px;background:#d2d2d2"></div>
<div class="a" style="left:1142px;top:479px;width:1px;height:272px;background:#d2d2d2"></div>
<div class="a" style="left:524px;top:491px;width:653px;height:12px;background:#f7f7f7"></div>
<div class="a" style="left:507px;top:467px;width:672px;height:12px;background:#555555"></div>
<div class="a" style="left:590px;top:468px;width:1px;height:11px;background:#4a4a4a"></div>
<div class="a" style="left:659px;top:468px;width:1px;height:11px;background:#4a4a4a"></div>
<div class="a" style="left:728px;top:468px;width:1px;height:11px;background:#4a4a4a"></div>
<div class="a" style="left:797px;top:468px;width:1px;height:11px;background:#4a4a4a"></div>
<div class="a" style="left:866px;top:468px;width:1px;height:11px;background:#4a4a4a"></div>
<div class="a" style="left:935px;top:468px;width:1px;height:11px;background:#4a4a4a"></div>
<div class="a" style="left:1004px;top:468px;width:1px;height:11px;background:#4a4a4a"></div>
<div class="a" style="left:1073px;top:468px;width:1px;height:11px;background:#4a4a4a"></div>
<div class="a" style="left:1142px;top:468px;width:1px;height:11px;background:#4a4a4a"></div>
<div class="a" style="left:515px;top:467px;width:664px;height:1px;background:#2a2a2a"></div>
<div class="a" style="left:515px;top:467px;width:7px;height:12px;background:#3a3a3a"></div>
<div class="a" style="left:515px;top:479px;width:7px;height:272px;background:#888888"></div>
<div class="a" style="left:522px;top:467px;width:1px;height:285px;background:#1e1e1e"></div>
<div class="a" style="left:1178px;top:467px;width:1px;height:285px;background:#1e1e1e"></div>
<div class="a" style="left:522px;top:751px;width:657px;height:1px;background:#1e1e1e"></div>
<span class="t" style="left:515.20px;top:466.16px;font-size:9.5px;line-height:13.5px;color:#ffffff;transform:scaleX(0.9734);font-weight:bold;">Words</span>
</div></body></html>
